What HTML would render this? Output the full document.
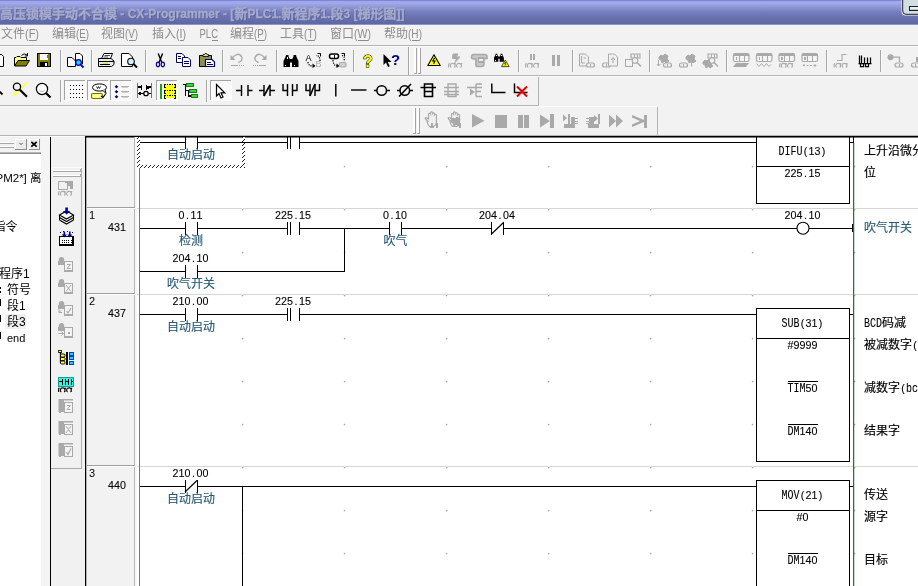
<!DOCTYPE html>
<html lang="zh"><head><meta charset="utf-8"><title>CX-Programmer</title>
<style>
html,body{margin:0;padding:0;background:#f2f2f2;overflow:hidden}
svg{display:block;position:absolute;left:0;top:0;will-change:transform}
text{white-space:pre}
</style></head><body>
<svg width="918" height="586" viewBox="0 0 918 586" shape-rendering="crispEdges">
<defs>
<linearGradient id="tg" x1="0" y1="0" x2="0" y2="1">
<stop offset="0" stop-color="#6c74ca"/><stop offset="0.06" stop-color="#9fa7ec"/><stop offset="0.13" stop-color="#a2aaea"/><stop offset="0.33" stop-color="#8a92d2"/><stop offset="0.5" stop-color="#767ebe"/><stop offset="0.7" stop-color="#6a72b0"/><stop offset="1" stop-color="#5f67a2"/>
</linearGradient>
<pattern id="hatch" width="4" height="4" patternUnits="userSpaceOnUse"><rect width="4" height="4" fill="#fff"/><path d="M-1,1 L1,-1 M0,4 L4,0 M3,5 L5,3" stroke="#222" stroke-width="1" shape-rendering="auto"/></pattern>
</defs>
<rect x="0" y="0" width="918" height="586" fill="#f2f2f2" stroke="none" stroke-width="1" />
<rect x="0" y="0" width="918" height="24" fill="url(#tg)" stroke="none" stroke-width="1" />
<rect x="0" y="24" width="918" height="1" fill="#8d93c2" stroke="none" stroke-width="1" />
<rect x="0" y="25" width="918" height="1" fill="#f2f3fb" stroke="none" stroke-width="1" />
<text x="0.8" y="18.7" font-weight="bold" fill="#59619a" font-family='"Liberation Sans", "Noto Sans CJK SC", sans-serif' ><tspan font-size="13">高压锁模手动不合模</tspan><tspan font-size="12"> - CX-Programmer - [</tspan><tspan font-size="13">新</tspan><tspan font-size="12">PLC1.</tspan><tspan font-size="13">新程序</tspan><tspan font-size="12">1.</tspan><tspan font-size="13">段</tspan><tspan font-size="12">3 [</tspan><tspan font-size="13">梯形图</tspan><tspan font-size="12">]]</tspan></text>
<text x="0" y="17.9" font-weight="bold" fill="#a6abce" font-family='"Liberation Sans", "Noto Sans CJK SC", sans-serif' stroke="#a6abce" stroke-width="0.3"><tspan font-size="13">高压锁模手动不合模</tspan><tspan font-size="12"> - CX-Programmer - [</tspan><tspan font-size="13">新</tspan><tspan font-size="12">PLC1.</tspan><tspan font-size="13">新程序</tspan><tspan font-size="12">1.</tspan><tspan font-size="13">段</tspan><tspan font-size="12">3 [</tspan><tspan font-size="13">梯形图</tspan><tspan font-size="12">]]</tspan></text>
<path d="M901.5,-1 V11.5 Q901.5,15.5 905.5,15.5 H919 V-1 Z" fill="#f4f6fa" shape-rendering="auto"/>
<path d="M902.7,-1 V11 Q902.7,14.3 906,14.3 H919 V-1 Z" fill="#d3dee2" stroke="#1c1f2c" stroke-width="1" shape-rendering="auto"/>
<rect x="909.5" y="6.5" width="10" height="4" fill="#ecf0f0" stroke="#1c1f2c" stroke-width="1" />
<rect x="910" y="9" width="9" height="1" fill="#c0c4c4" stroke="none" stroke-width="1" />
<text x="1" y="38.2" font-size="12" fill="#8c8c8c" font-family='"Liberation Sans", "Noto Sans CJK SC", sans-serif'>文件</text>
<text x="25" y="38" font-size="12.3" fill="#8c8c8c" font-family='"Liberation Sans", "Noto Sans CJK SC", sans-serif' textLength="14" lengthAdjust="spacingAndGlyphs">(F)</text>
<rect x="28.5" y="39.5" width="7.0" height="1" fill="#8c8c8c" stroke="none" stroke-width="1" />
<text x="52" y="38.2" font-size="12" fill="#8c8c8c" font-family='"Liberation Sans", "Noto Sans CJK SC", sans-serif'>编辑</text>
<text x="76" y="38" font-size="12.3" fill="#8c8c8c" font-family='"Liberation Sans", "Noto Sans CJK SC", sans-serif' textLength="13" lengthAdjust="spacingAndGlyphs">(E)</text>
<rect x="79.5" y="39.5" width="6.0" height="1" fill="#8c8c8c" stroke="none" stroke-width="1" />
<text x="101" y="38.2" font-size="12" fill="#8c8c8c" font-family='"Liberation Sans", "Noto Sans CJK SC", sans-serif'>视图</text>
<text x="125" y="38" font-size="12.3" fill="#8c8c8c" font-family='"Liberation Sans", "Noto Sans CJK SC", sans-serif' textLength="13" lengthAdjust="spacingAndGlyphs">(V)</text>
<rect x="128.5" y="39.5" width="6.0" height="1" fill="#8c8c8c" stroke="none" stroke-width="1" />
<text x="152" y="38.2" font-size="12" fill="#8c8c8c" font-family='"Liberation Sans", "Noto Sans CJK SC", sans-serif'>插入</text>
<text x="176" y="38" font-size="12.3" fill="#8c8c8c" font-family='"Liberation Sans", "Noto Sans CJK SC", sans-serif' textLength="10" lengthAdjust="spacingAndGlyphs">(I)</text>
<rect x="179.5" y="39.5" width="3.0" height="1" fill="#8c8c8c" stroke="none" stroke-width="1" />
<text x="199.5" y="38" font-size="12.3" fill="#8c8c8c" font-family='"Liberation Sans", "Noto Sans CJK SC", sans-serif' textLength="18.5" lengthAdjust="spacingAndGlyphs">PLC</text>
<rect x="211.5" y="39.5" width="6.5" height="1" fill="#8c8c8c" stroke="none" stroke-width="1" />
<text x="230" y="38.2" font-size="12" fill="#8c8c8c" font-family='"Liberation Sans", "Noto Sans CJK SC", sans-serif'>编程</text>
<text x="254" y="38" font-size="12.3" fill="#8c8c8c" font-family='"Liberation Sans", "Noto Sans CJK SC", sans-serif' textLength="13" lengthAdjust="spacingAndGlyphs">(P)</text>
<rect x="257.5" y="39.5" width="6.0" height="1" fill="#8c8c8c" stroke="none" stroke-width="1" />
<text x="280" y="38.2" font-size="12" fill="#8c8c8c" font-family='"Liberation Sans", "Noto Sans CJK SC", sans-serif'>工具</text>
<text x="304" y="38" font-size="12.3" fill="#8c8c8c" font-family='"Liberation Sans", "Noto Sans CJK SC", sans-serif' textLength="13" lengthAdjust="spacingAndGlyphs">(T)</text>
<rect x="307.5" y="39.5" width="6.0" height="1" fill="#8c8c8c" stroke="none" stroke-width="1" />
<text x="330" y="38.2" font-size="12" fill="#8c8c8c" font-family='"Liberation Sans", "Noto Sans CJK SC", sans-serif'>窗口</text>
<text x="354" y="38" font-size="12.3" fill="#8c8c8c" font-family='"Liberation Sans", "Noto Sans CJK SC", sans-serif' textLength="17" lengthAdjust="spacingAndGlyphs">(W)</text>
<rect x="357.5" y="39.5" width="10.0" height="1" fill="#8c8c8c" stroke="none" stroke-width="1" />
<text x="384" y="38.2" font-size="12" fill="#8c8c8c" font-family='"Liberation Sans", "Noto Sans CJK SC", sans-serif'>帮助</text>
<text x="408" y="38" font-size="12.3" fill="#8c8c8c" font-family='"Liberation Sans", "Noto Sans CJK SC", sans-serif' textLength="14" lengthAdjust="spacingAndGlyphs">(H)</text>
<rect x="411.5" y="39.5" width="7.0" height="1" fill="#8c8c8c" stroke="none" stroke-width="1" />
<rect x="0" y="45" width="918" height="1" fill="#b4b4b4" stroke="none" stroke-width="1" />
<rect x="0" y="46" width="918" height="1" fill="#fbfbfb" stroke="none" stroke-width="1" />
<rect x="0" y="75" width="918" height="1" fill="#b4b4b4" stroke="none" stroke-width="1" />
<rect x="0" y="76" width="918" height="1" fill="#fbfbfb" stroke="none" stroke-width="1" />
<rect x="0" y="105" width="538" height="1" fill="#b4b4b4" stroke="none" stroke-width="1" />
<rect x="0" y="106" width="657" height="1" fill="#fbfbfb" stroke="none" stroke-width="1" />
<rect x="538" y="77" width="1" height="29" fill="#b4b4b4" stroke="none" stroke-width="1" />
<rect x="657" y="107" width="1" height="29" fill="#b4b4b4" stroke="none" stroke-width="1" />
<rect x="0" y="135" width="918" height="1" fill="#b4b4b4" stroke="none" stroke-width="1" />
<rect x="0" y="136" width="918" height="1" fill="#fcfcfc" stroke="none" stroke-width="1" />
<rect x="0" y="154" width="41" height="432" fill="#ffffff" stroke="none" stroke-width="1" />
<rect x="0" y="152" width="41" height="1" fill="#b8b8b8" stroke="none" stroke-width="1" />
<rect x="0" y="153" width="41" height="1" fill="#8c8c8c" stroke="none" stroke-width="1" />
<rect x="50" y="137" width="1" height="449" fill="#000" stroke="none" stroke-width="1" />
<rect x="51" y="137" width="1" height="449" fill="#000" stroke="none" stroke-width="1" opacity="0.25"/>
<rect x="0" y="142" width="14" height="1" fill="#fff" stroke="none" stroke-width="1" />
<rect x="0" y="143" width="14" height="1" fill="#a8a8a8" stroke="none" stroke-width="1" />
<rect x="0" y="146" width="14" height="1" fill="#fff" stroke="none" stroke-width="1" />
<rect x="0" y="147" width="14" height="1" fill="#a8a8a8" stroke="none" stroke-width="1" />
<rect x="15" y="139" width="12" height="11" fill="#ececec" stroke="none" stroke-width="1" />
<rect x="15" y="139" width="12" height="1" fill="#fff" stroke="none" stroke-width="1" />
<rect x="15" y="139" width="1" height="11" fill="#fff" stroke="none" stroke-width="1" />
<rect x="26" y="139" width="1" height="11" fill="#8c8c8c" stroke="none" stroke-width="1" />
<rect x="15" y="149" width="12" height="1" fill="#8c8c8c" stroke="none" stroke-width="1" />
<path d="M18.5,142.5 h5 l-2.5,3 z" fill="#a0a0a0"/>
<rect x="29" y="139" width="11" height="11" fill="#ececec" stroke="none" stroke-width="1" />
<rect x="29" y="139" width="11" height="1" fill="#fff" stroke="none" stroke-width="1" />
<rect x="29" y="139" width="1" height="11" fill="#fff" stroke="none" stroke-width="1" />
<rect x="39" y="139" width="1" height="11" fill="#8c8c8c" stroke="none" stroke-width="1" />
<rect x="29" y="149" width="11" height="1" fill="#8c8c8c" stroke="none" stroke-width="1" />
<path d="M31.3,141.8 L36.7,146.7 M36.7,141.8 L31.3,146.7" stroke="#000" stroke-width="1.8" shape-rendering="auto"/>
<text x="-4.5" y="181.5" font-size="11.5" fill="#000" font-family='"Liberation Sans", "Noto Sans CJK SC", sans-serif'>PM2*] 离</text>
<text x="-6.5" y="230.5" font-size="12" fill="#000" font-family='"Liberation Sans", "Noto Sans CJK SC", sans-serif'>指令</text>
<text x="-13" y="277.9" font-size="12" fill="#000" font-family='"Liberation Sans", "Noto Sans CJK SC", sans-serif'>新程序1</text>
<text x="7" y="294" font-size="12" fill="#000" font-family='"Liberation Sans", "Noto Sans CJK SC", sans-serif'>符号</text>
<text x="7" y="310" font-size="12" fill="#000" font-family='"Liberation Sans", "Noto Sans CJK SC", sans-serif'>段1</text>
<rect x="5" y="314" width="21" height="15" fill="#f0f0f0" stroke="none" stroke-width="1" />
<text x="7" y="326" font-size="12" fill="#000" font-family='"Liberation Sans", "Noto Sans CJK SC", sans-serif'>段3</text>
<text x="7" y="342" font-size="11" fill="#000" font-family='"Liberation Sans", "Noto Sans CJK SC", sans-serif'>end</text>
<rect x="41" y="137" width="9" height="449" fill="#f4f4f4" stroke="none" stroke-width="1" />
<rect x="0" y="287" width="1" height="2" fill="#000" stroke="none" stroke-width="1" />
<rect x="0" y="291" width="1" height="2" fill="#000" stroke="none" stroke-width="1" />
<rect x="0" y="299" width="1" height="7" fill="#000" stroke="none" stroke-width="1" />
<rect x="0" y="315" width="1" height="7" fill="#000" stroke="none" stroke-width="1" />
<rect x="0" y="332" width="1" height="7" fill="#000" stroke="none" stroke-width="1" />
<rect x="51" y="137" width="34" height="449" fill="#f1f1f1" stroke="none" stroke-width="1" />
<rect x="51" y="468" width="31" height="1" fill="#a8a8a8" stroke="none" stroke-width="1" />
<rect x="81" y="167" width="1" height="301" fill="#b0b0b0" stroke="none" stroke-width="1" />
<rect x="53" y="170" width="27" height="1" fill="#fff" stroke="none" stroke-width="1" />
<rect x="53" y="171" width="27" height="1" fill="#a8a8a8" stroke="none" stroke-width="1" />
<rect x="80" y="169" width="1" height="3" fill="#a8a8a8" stroke="none" stroke-width="1" />
<rect x="53" y="175" width="27" height="1" fill="#fff" stroke="none" stroke-width="1" />
<rect x="53" y="176" width="27" height="1" fill="#a8a8a8" stroke="none" stroke-width="1" />
<rect x="80" y="174" width="1" height="3" fill="#a8a8a8" stroke="none" stroke-width="1" />
<rect x="52" y="167" width="30" height="1" fill="#fbfbfb" stroke="none" stroke-width="1" />
<rect x="85" y="136" width="833" height="450" fill="#ffffff" stroke="none" stroke-width="1" />
<rect x="85" y="136" width="833" height="1" fill="#000" stroke="none" stroke-width="1" />
<rect x="85" y="137" width="833" height="1" fill="#000" stroke="none" stroke-width="1" opacity="0.55"/>
<rect x="85" y="136" width="1" height="450" fill="#000" stroke="none" stroke-width="1" />
<rect x="86" y="137" width="1" height="449" fill="#000" stroke="none" stroke-width="1" opacity="0.3"/>
<rect x="86.5" y="137.5" width="48" height="449" fill="#f2f2f2" stroke="none" stroke-width="1" />
<rect x="134" y="137" width="1" height="449" fill="#b8b8b8" stroke="none" stroke-width="1" />
<rect x="135" y="137" width="2" height="449" fill="#f6f6f6" stroke="none" stroke-width="1" />
<rect x="137" y="208" width="781" height="1" fill="#d6d6d6" stroke="none" stroke-width="1" />
<rect x="86.5" y="207" width="48" height="1" fill="#a0a0a0" stroke="none" stroke-width="1" />
<rect x="86.5" y="208" width="48" height="1" fill="#fdfdfd" stroke="none" stroke-width="1" />
<rect x="137" y="294" width="781" height="1" fill="#d6d6d6" stroke="none" stroke-width="1" />
<rect x="86.5" y="293" width="48" height="1" fill="#a0a0a0" stroke="none" stroke-width="1" />
<rect x="86.5" y="294" width="48" height="1" fill="#fdfdfd" stroke="none" stroke-width="1" />
<rect x="137" y="466" width="781" height="1" fill="#d6d6d6" stroke="none" stroke-width="1" />
<rect x="86.5" y="465" width="48" height="1" fill="#a0a0a0" stroke="none" stroke-width="1" />
<rect x="86.5" y="466" width="48" height="1" fill="#fdfdfd" stroke="none" stroke-width="1" />
<rect x="242" y="166" width="1" height="1" fill="#adadad" stroke="none" stroke-width="1" />
<rect x="243" y="166" width="1" height="1" fill="#dedede" stroke="none" stroke-width="1" />
<rect x="242" y="167" width="1" height="1" fill="#dedede" stroke="none" stroke-width="1" />
<rect x="241" y="166" width="1" height="1" fill="#efefef" stroke="none" stroke-width="1" />
<rect x="242" y="165" width="1" height="1" fill="#efefef" stroke="none" stroke-width="1" />
<rect x="344" y="166" width="1" height="1" fill="#adadad" stroke="none" stroke-width="1" />
<rect x="345" y="166" width="1" height="1" fill="#dedede" stroke="none" stroke-width="1" />
<rect x="344" y="167" width="1" height="1" fill="#dedede" stroke="none" stroke-width="1" />
<rect x="343" y="166" width="1" height="1" fill="#efefef" stroke="none" stroke-width="1" />
<rect x="344" y="165" width="1" height="1" fill="#efefef" stroke="none" stroke-width="1" />
<rect x="446" y="166" width="1" height="1" fill="#adadad" stroke="none" stroke-width="1" />
<rect x="447" y="166" width="1" height="1" fill="#dedede" stroke="none" stroke-width="1" />
<rect x="446" y="167" width="1" height="1" fill="#dedede" stroke="none" stroke-width="1" />
<rect x="445" y="166" width="1" height="1" fill="#efefef" stroke="none" stroke-width="1" />
<rect x="446" y="165" width="1" height="1" fill="#efefef" stroke="none" stroke-width="1" />
<rect x="548" y="166" width="1" height="1" fill="#adadad" stroke="none" stroke-width="1" />
<rect x="549" y="166" width="1" height="1" fill="#dedede" stroke="none" stroke-width="1" />
<rect x="548" y="167" width="1" height="1" fill="#dedede" stroke="none" stroke-width="1" />
<rect x="547" y="166" width="1" height="1" fill="#efefef" stroke="none" stroke-width="1" />
<rect x="548" y="165" width="1" height="1" fill="#efefef" stroke="none" stroke-width="1" />
<rect x="650" y="166" width="1" height="1" fill="#adadad" stroke="none" stroke-width="1" />
<rect x="651" y="166" width="1" height="1" fill="#dedede" stroke="none" stroke-width="1" />
<rect x="650" y="167" width="1" height="1" fill="#dedede" stroke="none" stroke-width="1" />
<rect x="649" y="166" width="1" height="1" fill="#efefef" stroke="none" stroke-width="1" />
<rect x="650" y="165" width="1" height="1" fill="#efefef" stroke="none" stroke-width="1" />
<rect x="752" y="166" width="1" height="1" fill="#adadad" stroke="none" stroke-width="1" />
<rect x="753" y="166" width="1" height="1" fill="#dedede" stroke="none" stroke-width="1" />
<rect x="752" y="167" width="1" height="1" fill="#dedede" stroke="none" stroke-width="1" />
<rect x="751" y="166" width="1" height="1" fill="#efefef" stroke="none" stroke-width="1" />
<rect x="752" y="165" width="1" height="1" fill="#efefef" stroke="none" stroke-width="1" />
<rect x="854" y="166" width="1" height="1" fill="#adadad" stroke="none" stroke-width="1" />
<rect x="855" y="166" width="1" height="1" fill="#dedede" stroke="none" stroke-width="1" />
<rect x="854" y="167" width="1" height="1" fill="#dedede" stroke="none" stroke-width="1" />
<rect x="853" y="166" width="1" height="1" fill="#efefef" stroke="none" stroke-width="1" />
<rect x="854" y="165" width="1" height="1" fill="#efefef" stroke="none" stroke-width="1" />
<rect x="242" y="209" width="1" height="1" fill="#adadad" stroke="none" stroke-width="1" />
<rect x="243" y="209" width="1" height="1" fill="#dedede" stroke="none" stroke-width="1" />
<rect x="242" y="210" width="1" height="1" fill="#dedede" stroke="none" stroke-width="1" />
<rect x="241" y="209" width="1" height="1" fill="#efefef" stroke="none" stroke-width="1" />
<rect x="242" y="208" width="1" height="1" fill="#efefef" stroke="none" stroke-width="1" />
<rect x="344" y="209" width="1" height="1" fill="#adadad" stroke="none" stroke-width="1" />
<rect x="345" y="209" width="1" height="1" fill="#dedede" stroke="none" stroke-width="1" />
<rect x="344" y="210" width="1" height="1" fill="#dedede" stroke="none" stroke-width="1" />
<rect x="343" y="209" width="1" height="1" fill="#efefef" stroke="none" stroke-width="1" />
<rect x="344" y="208" width="1" height="1" fill="#efefef" stroke="none" stroke-width="1" />
<rect x="446" y="209" width="1" height="1" fill="#adadad" stroke="none" stroke-width="1" />
<rect x="447" y="209" width="1" height="1" fill="#dedede" stroke="none" stroke-width="1" />
<rect x="446" y="210" width="1" height="1" fill="#dedede" stroke="none" stroke-width="1" />
<rect x="445" y="209" width="1" height="1" fill="#efefef" stroke="none" stroke-width="1" />
<rect x="446" y="208" width="1" height="1" fill="#efefef" stroke="none" stroke-width="1" />
<rect x="548" y="209" width="1" height="1" fill="#adadad" stroke="none" stroke-width="1" />
<rect x="549" y="209" width="1" height="1" fill="#dedede" stroke="none" stroke-width="1" />
<rect x="548" y="210" width="1" height="1" fill="#dedede" stroke="none" stroke-width="1" />
<rect x="547" y="209" width="1" height="1" fill="#efefef" stroke="none" stroke-width="1" />
<rect x="548" y="208" width="1" height="1" fill="#efefef" stroke="none" stroke-width="1" />
<rect x="650" y="209" width="1" height="1" fill="#adadad" stroke="none" stroke-width="1" />
<rect x="651" y="209" width="1" height="1" fill="#dedede" stroke="none" stroke-width="1" />
<rect x="650" y="210" width="1" height="1" fill="#dedede" stroke="none" stroke-width="1" />
<rect x="649" y="209" width="1" height="1" fill="#efefef" stroke="none" stroke-width="1" />
<rect x="650" y="208" width="1" height="1" fill="#efefef" stroke="none" stroke-width="1" />
<rect x="752" y="209" width="1" height="1" fill="#adadad" stroke="none" stroke-width="1" />
<rect x="753" y="209" width="1" height="1" fill="#dedede" stroke="none" stroke-width="1" />
<rect x="752" y="210" width="1" height="1" fill="#dedede" stroke="none" stroke-width="1" />
<rect x="751" y="209" width="1" height="1" fill="#efefef" stroke="none" stroke-width="1" />
<rect x="752" y="208" width="1" height="1" fill="#efefef" stroke="none" stroke-width="1" />
<rect x="854" y="209" width="1" height="1" fill="#adadad" stroke="none" stroke-width="1" />
<rect x="855" y="209" width="1" height="1" fill="#dedede" stroke="none" stroke-width="1" />
<rect x="854" y="210" width="1" height="1" fill="#dedede" stroke="none" stroke-width="1" />
<rect x="853" y="209" width="1" height="1" fill="#efefef" stroke="none" stroke-width="1" />
<rect x="854" y="208" width="1" height="1" fill="#efefef" stroke="none" stroke-width="1" />
<rect x="242" y="252" width="1" height="1" fill="#adadad" stroke="none" stroke-width="1" />
<rect x="243" y="252" width="1" height="1" fill="#dedede" stroke="none" stroke-width="1" />
<rect x="242" y="253" width="1" height="1" fill="#dedede" stroke="none" stroke-width="1" />
<rect x="241" y="252" width="1" height="1" fill="#efefef" stroke="none" stroke-width="1" />
<rect x="242" y="251" width="1" height="1" fill="#efefef" stroke="none" stroke-width="1" />
<rect x="344" y="252" width="1" height="1" fill="#adadad" stroke="none" stroke-width="1" />
<rect x="345" y="252" width="1" height="1" fill="#dedede" stroke="none" stroke-width="1" />
<rect x="344" y="253" width="1" height="1" fill="#dedede" stroke="none" stroke-width="1" />
<rect x="343" y="252" width="1" height="1" fill="#efefef" stroke="none" stroke-width="1" />
<rect x="344" y="251" width="1" height="1" fill="#efefef" stroke="none" stroke-width="1" />
<rect x="446" y="252" width="1" height="1" fill="#adadad" stroke="none" stroke-width="1" />
<rect x="447" y="252" width="1" height="1" fill="#dedede" stroke="none" stroke-width="1" />
<rect x="446" y="253" width="1" height="1" fill="#dedede" stroke="none" stroke-width="1" />
<rect x="445" y="252" width="1" height="1" fill="#efefef" stroke="none" stroke-width="1" />
<rect x="446" y="251" width="1" height="1" fill="#efefef" stroke="none" stroke-width="1" />
<rect x="548" y="252" width="1" height="1" fill="#adadad" stroke="none" stroke-width="1" />
<rect x="549" y="252" width="1" height="1" fill="#dedede" stroke="none" stroke-width="1" />
<rect x="548" y="253" width="1" height="1" fill="#dedede" stroke="none" stroke-width="1" />
<rect x="547" y="252" width="1" height="1" fill="#efefef" stroke="none" stroke-width="1" />
<rect x="548" y="251" width="1" height="1" fill="#efefef" stroke="none" stroke-width="1" />
<rect x="650" y="252" width="1" height="1" fill="#adadad" stroke="none" stroke-width="1" />
<rect x="651" y="252" width="1" height="1" fill="#dedede" stroke="none" stroke-width="1" />
<rect x="650" y="253" width="1" height="1" fill="#dedede" stroke="none" stroke-width="1" />
<rect x="649" y="252" width="1" height="1" fill="#efefef" stroke="none" stroke-width="1" />
<rect x="650" y="251" width="1" height="1" fill="#efefef" stroke="none" stroke-width="1" />
<rect x="752" y="252" width="1" height="1" fill="#adadad" stroke="none" stroke-width="1" />
<rect x="753" y="252" width="1" height="1" fill="#dedede" stroke="none" stroke-width="1" />
<rect x="752" y="253" width="1" height="1" fill="#dedede" stroke="none" stroke-width="1" />
<rect x="751" y="252" width="1" height="1" fill="#efefef" stroke="none" stroke-width="1" />
<rect x="752" y="251" width="1" height="1" fill="#efefef" stroke="none" stroke-width="1" />
<rect x="854" y="252" width="1" height="1" fill="#adadad" stroke="none" stroke-width="1" />
<rect x="855" y="252" width="1" height="1" fill="#dedede" stroke="none" stroke-width="1" />
<rect x="854" y="253" width="1" height="1" fill="#dedede" stroke="none" stroke-width="1" />
<rect x="853" y="252" width="1" height="1" fill="#efefef" stroke="none" stroke-width="1" />
<rect x="854" y="251" width="1" height="1" fill="#efefef" stroke="none" stroke-width="1" />
<rect x="242" y="295" width="1" height="1" fill="#adadad" stroke="none" stroke-width="1" />
<rect x="243" y="295" width="1" height="1" fill="#dedede" stroke="none" stroke-width="1" />
<rect x="242" y="296" width="1" height="1" fill="#dedede" stroke="none" stroke-width="1" />
<rect x="241" y="295" width="1" height="1" fill="#efefef" stroke="none" stroke-width="1" />
<rect x="242" y="294" width="1" height="1" fill="#efefef" stroke="none" stroke-width="1" />
<rect x="344" y="295" width="1" height="1" fill="#adadad" stroke="none" stroke-width="1" />
<rect x="345" y="295" width="1" height="1" fill="#dedede" stroke="none" stroke-width="1" />
<rect x="344" y="296" width="1" height="1" fill="#dedede" stroke="none" stroke-width="1" />
<rect x="343" y="295" width="1" height="1" fill="#efefef" stroke="none" stroke-width="1" />
<rect x="344" y="294" width="1" height="1" fill="#efefef" stroke="none" stroke-width="1" />
<rect x="446" y="295" width="1" height="1" fill="#adadad" stroke="none" stroke-width="1" />
<rect x="447" y="295" width="1" height="1" fill="#dedede" stroke="none" stroke-width="1" />
<rect x="446" y="296" width="1" height="1" fill="#dedede" stroke="none" stroke-width="1" />
<rect x="445" y="295" width="1" height="1" fill="#efefef" stroke="none" stroke-width="1" />
<rect x="446" y="294" width="1" height="1" fill="#efefef" stroke="none" stroke-width="1" />
<rect x="548" y="295" width="1" height="1" fill="#adadad" stroke="none" stroke-width="1" />
<rect x="549" y="295" width="1" height="1" fill="#dedede" stroke="none" stroke-width="1" />
<rect x="548" y="296" width="1" height="1" fill="#dedede" stroke="none" stroke-width="1" />
<rect x="547" y="295" width="1" height="1" fill="#efefef" stroke="none" stroke-width="1" />
<rect x="548" y="294" width="1" height="1" fill="#efefef" stroke="none" stroke-width="1" />
<rect x="650" y="295" width="1" height="1" fill="#adadad" stroke="none" stroke-width="1" />
<rect x="651" y="295" width="1" height="1" fill="#dedede" stroke="none" stroke-width="1" />
<rect x="650" y="296" width="1" height="1" fill="#dedede" stroke="none" stroke-width="1" />
<rect x="649" y="295" width="1" height="1" fill="#efefef" stroke="none" stroke-width="1" />
<rect x="650" y="294" width="1" height="1" fill="#efefef" stroke="none" stroke-width="1" />
<rect x="752" y="295" width="1" height="1" fill="#adadad" stroke="none" stroke-width="1" />
<rect x="753" y="295" width="1" height="1" fill="#dedede" stroke="none" stroke-width="1" />
<rect x="752" y="296" width="1" height="1" fill="#dedede" stroke="none" stroke-width="1" />
<rect x="751" y="295" width="1" height="1" fill="#efefef" stroke="none" stroke-width="1" />
<rect x="752" y="294" width="1" height="1" fill="#efefef" stroke="none" stroke-width="1" />
<rect x="854" y="295" width="1" height="1" fill="#adadad" stroke="none" stroke-width="1" />
<rect x="855" y="295" width="1" height="1" fill="#dedede" stroke="none" stroke-width="1" />
<rect x="854" y="296" width="1" height="1" fill="#dedede" stroke="none" stroke-width="1" />
<rect x="853" y="295" width="1" height="1" fill="#efefef" stroke="none" stroke-width="1" />
<rect x="854" y="294" width="1" height="1" fill="#efefef" stroke="none" stroke-width="1" />
<rect x="242" y="338" width="1" height="1" fill="#adadad" stroke="none" stroke-width="1" />
<rect x="243" y="338" width="1" height="1" fill="#dedede" stroke="none" stroke-width="1" />
<rect x="242" y="339" width="1" height="1" fill="#dedede" stroke="none" stroke-width="1" />
<rect x="241" y="338" width="1" height="1" fill="#efefef" stroke="none" stroke-width="1" />
<rect x="242" y="337" width="1" height="1" fill="#efefef" stroke="none" stroke-width="1" />
<rect x="344" y="338" width="1" height="1" fill="#adadad" stroke="none" stroke-width="1" />
<rect x="345" y="338" width="1" height="1" fill="#dedede" stroke="none" stroke-width="1" />
<rect x="344" y="339" width="1" height="1" fill="#dedede" stroke="none" stroke-width="1" />
<rect x="343" y="338" width="1" height="1" fill="#efefef" stroke="none" stroke-width="1" />
<rect x="344" y="337" width="1" height="1" fill="#efefef" stroke="none" stroke-width="1" />
<rect x="446" y="338" width="1" height="1" fill="#adadad" stroke="none" stroke-width="1" />
<rect x="447" y="338" width="1" height="1" fill="#dedede" stroke="none" stroke-width="1" />
<rect x="446" y="339" width="1" height="1" fill="#dedede" stroke="none" stroke-width="1" />
<rect x="445" y="338" width="1" height="1" fill="#efefef" stroke="none" stroke-width="1" />
<rect x="446" y="337" width="1" height="1" fill="#efefef" stroke="none" stroke-width="1" />
<rect x="548" y="338" width="1" height="1" fill="#adadad" stroke="none" stroke-width="1" />
<rect x="549" y="338" width="1" height="1" fill="#dedede" stroke="none" stroke-width="1" />
<rect x="548" y="339" width="1" height="1" fill="#dedede" stroke="none" stroke-width="1" />
<rect x="547" y="338" width="1" height="1" fill="#efefef" stroke="none" stroke-width="1" />
<rect x="548" y="337" width="1" height="1" fill="#efefef" stroke="none" stroke-width="1" />
<rect x="650" y="338" width="1" height="1" fill="#adadad" stroke="none" stroke-width="1" />
<rect x="651" y="338" width="1" height="1" fill="#dedede" stroke="none" stroke-width="1" />
<rect x="650" y="339" width="1" height="1" fill="#dedede" stroke="none" stroke-width="1" />
<rect x="649" y="338" width="1" height="1" fill="#efefef" stroke="none" stroke-width="1" />
<rect x="650" y="337" width="1" height="1" fill="#efefef" stroke="none" stroke-width="1" />
<rect x="752" y="338" width="1" height="1" fill="#adadad" stroke="none" stroke-width="1" />
<rect x="753" y="338" width="1" height="1" fill="#dedede" stroke="none" stroke-width="1" />
<rect x="752" y="339" width="1" height="1" fill="#dedede" stroke="none" stroke-width="1" />
<rect x="751" y="338" width="1" height="1" fill="#efefef" stroke="none" stroke-width="1" />
<rect x="752" y="337" width="1" height="1" fill="#efefef" stroke="none" stroke-width="1" />
<rect x="854" y="338" width="1" height="1" fill="#adadad" stroke="none" stroke-width="1" />
<rect x="855" y="338" width="1" height="1" fill="#dedede" stroke="none" stroke-width="1" />
<rect x="854" y="339" width="1" height="1" fill="#dedede" stroke="none" stroke-width="1" />
<rect x="853" y="338" width="1" height="1" fill="#efefef" stroke="none" stroke-width="1" />
<rect x="854" y="337" width="1" height="1" fill="#efefef" stroke="none" stroke-width="1" />
<rect x="242" y="381" width="1" height="1" fill="#adadad" stroke="none" stroke-width="1" />
<rect x="243" y="381" width="1" height="1" fill="#dedede" stroke="none" stroke-width="1" />
<rect x="242" y="382" width="1" height="1" fill="#dedede" stroke="none" stroke-width="1" />
<rect x="241" y="381" width="1" height="1" fill="#efefef" stroke="none" stroke-width="1" />
<rect x="242" y="380" width="1" height="1" fill="#efefef" stroke="none" stroke-width="1" />
<rect x="344" y="381" width="1" height="1" fill="#adadad" stroke="none" stroke-width="1" />
<rect x="345" y="381" width="1" height="1" fill="#dedede" stroke="none" stroke-width="1" />
<rect x="344" y="382" width="1" height="1" fill="#dedede" stroke="none" stroke-width="1" />
<rect x="343" y="381" width="1" height="1" fill="#efefef" stroke="none" stroke-width="1" />
<rect x="344" y="380" width="1" height="1" fill="#efefef" stroke="none" stroke-width="1" />
<rect x="446" y="381" width="1" height="1" fill="#adadad" stroke="none" stroke-width="1" />
<rect x="447" y="381" width="1" height="1" fill="#dedede" stroke="none" stroke-width="1" />
<rect x="446" y="382" width="1" height="1" fill="#dedede" stroke="none" stroke-width="1" />
<rect x="445" y="381" width="1" height="1" fill="#efefef" stroke="none" stroke-width="1" />
<rect x="446" y="380" width="1" height="1" fill="#efefef" stroke="none" stroke-width="1" />
<rect x="548" y="381" width="1" height="1" fill="#adadad" stroke="none" stroke-width="1" />
<rect x="549" y="381" width="1" height="1" fill="#dedede" stroke="none" stroke-width="1" />
<rect x="548" y="382" width="1" height="1" fill="#dedede" stroke="none" stroke-width="1" />
<rect x="547" y="381" width="1" height="1" fill="#efefef" stroke="none" stroke-width="1" />
<rect x="548" y="380" width="1" height="1" fill="#efefef" stroke="none" stroke-width="1" />
<rect x="650" y="381" width="1" height="1" fill="#adadad" stroke="none" stroke-width="1" />
<rect x="651" y="381" width="1" height="1" fill="#dedede" stroke="none" stroke-width="1" />
<rect x="650" y="382" width="1" height="1" fill="#dedede" stroke="none" stroke-width="1" />
<rect x="649" y="381" width="1" height="1" fill="#efefef" stroke="none" stroke-width="1" />
<rect x="650" y="380" width="1" height="1" fill="#efefef" stroke="none" stroke-width="1" />
<rect x="752" y="381" width="1" height="1" fill="#adadad" stroke="none" stroke-width="1" />
<rect x="753" y="381" width="1" height="1" fill="#dedede" stroke="none" stroke-width="1" />
<rect x="752" y="382" width="1" height="1" fill="#dedede" stroke="none" stroke-width="1" />
<rect x="751" y="381" width="1" height="1" fill="#efefef" stroke="none" stroke-width="1" />
<rect x="752" y="380" width="1" height="1" fill="#efefef" stroke="none" stroke-width="1" />
<rect x="854" y="381" width="1" height="1" fill="#adadad" stroke="none" stroke-width="1" />
<rect x="855" y="381" width="1" height="1" fill="#dedede" stroke="none" stroke-width="1" />
<rect x="854" y="382" width="1" height="1" fill="#dedede" stroke="none" stroke-width="1" />
<rect x="853" y="381" width="1" height="1" fill="#efefef" stroke="none" stroke-width="1" />
<rect x="854" y="380" width="1" height="1" fill="#efefef" stroke="none" stroke-width="1" />
<rect x="242" y="424" width="1" height="1" fill="#adadad" stroke="none" stroke-width="1" />
<rect x="243" y="424" width="1" height="1" fill="#dedede" stroke="none" stroke-width="1" />
<rect x="242" y="425" width="1" height="1" fill="#dedede" stroke="none" stroke-width="1" />
<rect x="241" y="424" width="1" height="1" fill="#efefef" stroke="none" stroke-width="1" />
<rect x="242" y="423" width="1" height="1" fill="#efefef" stroke="none" stroke-width="1" />
<rect x="344" y="424" width="1" height="1" fill="#adadad" stroke="none" stroke-width="1" />
<rect x="345" y="424" width="1" height="1" fill="#dedede" stroke="none" stroke-width="1" />
<rect x="344" y="425" width="1" height="1" fill="#dedede" stroke="none" stroke-width="1" />
<rect x="343" y="424" width="1" height="1" fill="#efefef" stroke="none" stroke-width="1" />
<rect x="344" y="423" width="1" height="1" fill="#efefef" stroke="none" stroke-width="1" />
<rect x="446" y="424" width="1" height="1" fill="#adadad" stroke="none" stroke-width="1" />
<rect x="447" y="424" width="1" height="1" fill="#dedede" stroke="none" stroke-width="1" />
<rect x="446" y="425" width="1" height="1" fill="#dedede" stroke="none" stroke-width="1" />
<rect x="445" y="424" width="1" height="1" fill="#efefef" stroke="none" stroke-width="1" />
<rect x="446" y="423" width="1" height="1" fill="#efefef" stroke="none" stroke-width="1" />
<rect x="548" y="424" width="1" height="1" fill="#adadad" stroke="none" stroke-width="1" />
<rect x="549" y="424" width="1" height="1" fill="#dedede" stroke="none" stroke-width="1" />
<rect x="548" y="425" width="1" height="1" fill="#dedede" stroke="none" stroke-width="1" />
<rect x="547" y="424" width="1" height="1" fill="#efefef" stroke="none" stroke-width="1" />
<rect x="548" y="423" width="1" height="1" fill="#efefef" stroke="none" stroke-width="1" />
<rect x="650" y="424" width="1" height="1" fill="#adadad" stroke="none" stroke-width="1" />
<rect x="651" y="424" width="1" height="1" fill="#dedede" stroke="none" stroke-width="1" />
<rect x="650" y="425" width="1" height="1" fill="#dedede" stroke="none" stroke-width="1" />
<rect x="649" y="424" width="1" height="1" fill="#efefef" stroke="none" stroke-width="1" />
<rect x="650" y="423" width="1" height="1" fill="#efefef" stroke="none" stroke-width="1" />
<rect x="752" y="424" width="1" height="1" fill="#adadad" stroke="none" stroke-width="1" />
<rect x="753" y="424" width="1" height="1" fill="#dedede" stroke="none" stroke-width="1" />
<rect x="752" y="425" width="1" height="1" fill="#dedede" stroke="none" stroke-width="1" />
<rect x="751" y="424" width="1" height="1" fill="#efefef" stroke="none" stroke-width="1" />
<rect x="752" y="423" width="1" height="1" fill="#efefef" stroke="none" stroke-width="1" />
<rect x="854" y="424" width="1" height="1" fill="#adadad" stroke="none" stroke-width="1" />
<rect x="855" y="424" width="1" height="1" fill="#dedede" stroke="none" stroke-width="1" />
<rect x="854" y="425" width="1" height="1" fill="#dedede" stroke="none" stroke-width="1" />
<rect x="853" y="424" width="1" height="1" fill="#efefef" stroke="none" stroke-width="1" />
<rect x="854" y="423" width="1" height="1" fill="#efefef" stroke="none" stroke-width="1" />
<rect x="242" y="467" width="1" height="1" fill="#adadad" stroke="none" stroke-width="1" />
<rect x="243" y="467" width="1" height="1" fill="#dedede" stroke="none" stroke-width="1" />
<rect x="242" y="468" width="1" height="1" fill="#dedede" stroke="none" stroke-width="1" />
<rect x="241" y="467" width="1" height="1" fill="#efefef" stroke="none" stroke-width="1" />
<rect x="242" y="466" width="1" height="1" fill="#efefef" stroke="none" stroke-width="1" />
<rect x="344" y="467" width="1" height="1" fill="#adadad" stroke="none" stroke-width="1" />
<rect x="345" y="467" width="1" height="1" fill="#dedede" stroke="none" stroke-width="1" />
<rect x="344" y="468" width="1" height="1" fill="#dedede" stroke="none" stroke-width="1" />
<rect x="343" y="467" width="1" height="1" fill="#efefef" stroke="none" stroke-width="1" />
<rect x="344" y="466" width="1" height="1" fill="#efefef" stroke="none" stroke-width="1" />
<rect x="446" y="467" width="1" height="1" fill="#adadad" stroke="none" stroke-width="1" />
<rect x="447" y="467" width="1" height="1" fill="#dedede" stroke="none" stroke-width="1" />
<rect x="446" y="468" width="1" height="1" fill="#dedede" stroke="none" stroke-width="1" />
<rect x="445" y="467" width="1" height="1" fill="#efefef" stroke="none" stroke-width="1" />
<rect x="446" y="466" width="1" height="1" fill="#efefef" stroke="none" stroke-width="1" />
<rect x="548" y="467" width="1" height="1" fill="#adadad" stroke="none" stroke-width="1" />
<rect x="549" y="467" width="1" height="1" fill="#dedede" stroke="none" stroke-width="1" />
<rect x="548" y="468" width="1" height="1" fill="#dedede" stroke="none" stroke-width="1" />
<rect x="547" y="467" width="1" height="1" fill="#efefef" stroke="none" stroke-width="1" />
<rect x="548" y="466" width="1" height="1" fill="#efefef" stroke="none" stroke-width="1" />
<rect x="650" y="467" width="1" height="1" fill="#adadad" stroke="none" stroke-width="1" />
<rect x="651" y="467" width="1" height="1" fill="#dedede" stroke="none" stroke-width="1" />
<rect x="650" y="468" width="1" height="1" fill="#dedede" stroke="none" stroke-width="1" />
<rect x="649" y="467" width="1" height="1" fill="#efefef" stroke="none" stroke-width="1" />
<rect x="650" y="466" width="1" height="1" fill="#efefef" stroke="none" stroke-width="1" />
<rect x="752" y="467" width="1" height="1" fill="#adadad" stroke="none" stroke-width="1" />
<rect x="753" y="467" width="1" height="1" fill="#dedede" stroke="none" stroke-width="1" />
<rect x="752" y="468" width="1" height="1" fill="#dedede" stroke="none" stroke-width="1" />
<rect x="751" y="467" width="1" height="1" fill="#efefef" stroke="none" stroke-width="1" />
<rect x="752" y="466" width="1" height="1" fill="#efefef" stroke="none" stroke-width="1" />
<rect x="854" y="467" width="1" height="1" fill="#adadad" stroke="none" stroke-width="1" />
<rect x="855" y="467" width="1" height="1" fill="#dedede" stroke="none" stroke-width="1" />
<rect x="854" y="468" width="1" height="1" fill="#dedede" stroke="none" stroke-width="1" />
<rect x="853" y="467" width="1" height="1" fill="#efefef" stroke="none" stroke-width="1" />
<rect x="854" y="466" width="1" height="1" fill="#efefef" stroke="none" stroke-width="1" />
<rect x="242" y="510" width="1" height="1" fill="#adadad" stroke="none" stroke-width="1" />
<rect x="243" y="510" width="1" height="1" fill="#dedede" stroke="none" stroke-width="1" />
<rect x="242" y="511" width="1" height="1" fill="#dedede" stroke="none" stroke-width="1" />
<rect x="241" y="510" width="1" height="1" fill="#efefef" stroke="none" stroke-width="1" />
<rect x="242" y="509" width="1" height="1" fill="#efefef" stroke="none" stroke-width="1" />
<rect x="344" y="510" width="1" height="1" fill="#adadad" stroke="none" stroke-width="1" />
<rect x="345" y="510" width="1" height="1" fill="#dedede" stroke="none" stroke-width="1" />
<rect x="344" y="511" width="1" height="1" fill="#dedede" stroke="none" stroke-width="1" />
<rect x="343" y="510" width="1" height="1" fill="#efefef" stroke="none" stroke-width="1" />
<rect x="344" y="509" width="1" height="1" fill="#efefef" stroke="none" stroke-width="1" />
<rect x="446" y="510" width="1" height="1" fill="#adadad" stroke="none" stroke-width="1" />
<rect x="447" y="510" width="1" height="1" fill="#dedede" stroke="none" stroke-width="1" />
<rect x="446" y="511" width="1" height="1" fill="#dedede" stroke="none" stroke-width="1" />
<rect x="445" y="510" width="1" height="1" fill="#efefef" stroke="none" stroke-width="1" />
<rect x="446" y="509" width="1" height="1" fill="#efefef" stroke="none" stroke-width="1" />
<rect x="548" y="510" width="1" height="1" fill="#adadad" stroke="none" stroke-width="1" />
<rect x="549" y="510" width="1" height="1" fill="#dedede" stroke="none" stroke-width="1" />
<rect x="548" y="511" width="1" height="1" fill="#dedede" stroke="none" stroke-width="1" />
<rect x="547" y="510" width="1" height="1" fill="#efefef" stroke="none" stroke-width="1" />
<rect x="548" y="509" width="1" height="1" fill="#efefef" stroke="none" stroke-width="1" />
<rect x="650" y="510" width="1" height="1" fill="#adadad" stroke="none" stroke-width="1" />
<rect x="651" y="510" width="1" height="1" fill="#dedede" stroke="none" stroke-width="1" />
<rect x="650" y="511" width="1" height="1" fill="#dedede" stroke="none" stroke-width="1" />
<rect x="649" y="510" width="1" height="1" fill="#efefef" stroke="none" stroke-width="1" />
<rect x="650" y="509" width="1" height="1" fill="#efefef" stroke="none" stroke-width="1" />
<rect x="752" y="510" width="1" height="1" fill="#adadad" stroke="none" stroke-width="1" />
<rect x="753" y="510" width="1" height="1" fill="#dedede" stroke="none" stroke-width="1" />
<rect x="752" y="511" width="1" height="1" fill="#dedede" stroke="none" stroke-width="1" />
<rect x="751" y="510" width="1" height="1" fill="#efefef" stroke="none" stroke-width="1" />
<rect x="752" y="509" width="1" height="1" fill="#efefef" stroke="none" stroke-width="1" />
<rect x="854" y="510" width="1" height="1" fill="#adadad" stroke="none" stroke-width="1" />
<rect x="855" y="510" width="1" height="1" fill="#dedede" stroke="none" stroke-width="1" />
<rect x="854" y="511" width="1" height="1" fill="#dedede" stroke="none" stroke-width="1" />
<rect x="853" y="510" width="1" height="1" fill="#efefef" stroke="none" stroke-width="1" />
<rect x="854" y="509" width="1" height="1" fill="#efefef" stroke="none" stroke-width="1" />
<rect x="242" y="553" width="1" height="1" fill="#adadad" stroke="none" stroke-width="1" />
<rect x="243" y="553" width="1" height="1" fill="#dedede" stroke="none" stroke-width="1" />
<rect x="242" y="554" width="1" height="1" fill="#dedede" stroke="none" stroke-width="1" />
<rect x="241" y="553" width="1" height="1" fill="#efefef" stroke="none" stroke-width="1" />
<rect x="242" y="552" width="1" height="1" fill="#efefef" stroke="none" stroke-width="1" />
<rect x="344" y="553" width="1" height="1" fill="#adadad" stroke="none" stroke-width="1" />
<rect x="345" y="553" width="1" height="1" fill="#dedede" stroke="none" stroke-width="1" />
<rect x="344" y="554" width="1" height="1" fill="#dedede" stroke="none" stroke-width="1" />
<rect x="343" y="553" width="1" height="1" fill="#efefef" stroke="none" stroke-width="1" />
<rect x="344" y="552" width="1" height="1" fill="#efefef" stroke="none" stroke-width="1" />
<rect x="446" y="553" width="1" height="1" fill="#adadad" stroke="none" stroke-width="1" />
<rect x="447" y="553" width="1" height="1" fill="#dedede" stroke="none" stroke-width="1" />
<rect x="446" y="554" width="1" height="1" fill="#dedede" stroke="none" stroke-width="1" />
<rect x="445" y="553" width="1" height="1" fill="#efefef" stroke="none" stroke-width="1" />
<rect x="446" y="552" width="1" height="1" fill="#efefef" stroke="none" stroke-width="1" />
<rect x="548" y="553" width="1" height="1" fill="#adadad" stroke="none" stroke-width="1" />
<rect x="549" y="553" width="1" height="1" fill="#dedede" stroke="none" stroke-width="1" />
<rect x="548" y="554" width="1" height="1" fill="#dedede" stroke="none" stroke-width="1" />
<rect x="547" y="553" width="1" height="1" fill="#efefef" stroke="none" stroke-width="1" />
<rect x="548" y="552" width="1" height="1" fill="#efefef" stroke="none" stroke-width="1" />
<rect x="650" y="553" width="1" height="1" fill="#adadad" stroke="none" stroke-width="1" />
<rect x="651" y="553" width="1" height="1" fill="#dedede" stroke="none" stroke-width="1" />
<rect x="650" y="554" width="1" height="1" fill="#dedede" stroke="none" stroke-width="1" />
<rect x="649" y="553" width="1" height="1" fill="#efefef" stroke="none" stroke-width="1" />
<rect x="650" y="552" width="1" height="1" fill="#efefef" stroke="none" stroke-width="1" />
<rect x="752" y="553" width="1" height="1" fill="#adadad" stroke="none" stroke-width="1" />
<rect x="753" y="553" width="1" height="1" fill="#dedede" stroke="none" stroke-width="1" />
<rect x="752" y="554" width="1" height="1" fill="#dedede" stroke="none" stroke-width="1" />
<rect x="751" y="553" width="1" height="1" fill="#efefef" stroke="none" stroke-width="1" />
<rect x="752" y="552" width="1" height="1" fill="#efefef" stroke="none" stroke-width="1" />
<rect x="854" y="553" width="1" height="1" fill="#adadad" stroke="none" stroke-width="1" />
<rect x="855" y="553" width="1" height="1" fill="#dedede" stroke="none" stroke-width="1" />
<rect x="854" y="554" width="1" height="1" fill="#dedede" stroke="none" stroke-width="1" />
<rect x="853" y="553" width="1" height="1" fill="#efefef" stroke="none" stroke-width="1" />
<rect x="854" y="552" width="1" height="1" fill="#efefef" stroke="none" stroke-width="1" />
<rect x="139" y="137" width="1" height="449" fill="#3f9a4c" stroke="none" stroke-width="1" />
<rect x="853" y="143" width="1" height="443" fill="#2b7038" stroke="none" stroke-width="1" />
<rect x="854" y="143" width="1" height="443" fill="#2b7038" stroke="none" stroke-width="1" opacity="0.25"/>
<rect x="852.5" y="137" width="1.5" height="6" fill="#000" stroke="none" stroke-width="1" />
<path d="M137,137 H245 V168 H137 Z M140,137 V165 H242 V137 Z" fill="url(#hatch)" fill-rule="evenodd"/>
<rect x="140" y="141.5" width="45" height="1.2" fill="#000" stroke="none" stroke-width="1" />
<rect x="197" y="141.5" width="90" height="1.2" fill="#000" stroke="none" stroke-width="1" />
<rect x="299" y="141.5" width="457" height="1.2" fill="#000" stroke="none" stroke-width="1" />
<rect x="184.5" y="136" width="1.2" height="12.5" fill="#000" stroke="none" stroke-width="1" />
<rect x="196.5" y="136" width="1.2" height="12.5" fill="#000" stroke="none" stroke-width="1" />
<text x="173.0 185.0 197.0 209.0" y="159.4" font-size="12" fill="#2a5b75" stroke="#2a5b75" stroke-width="0.15" text-anchor="middle" font-family='"Liberation Sans", "Noto Sans CJK SC", sans-serif' >自动启动</text>
<rect x="287.0" y="136" width="1.2" height="12.5" fill="#000" stroke="none" stroke-width="1" />
<rect x="299.0" y="136" width="1.2" height="12.5" fill="#000" stroke="none" stroke-width="1" />
<rect x="290.0" y="136" width="1.2" height="12.5" fill="#000" stroke="none" stroke-width="1" />
<rect x="755.5" y="137" width="1.2" height="66" fill="#000" stroke="none" stroke-width="1" />
<rect x="849.0" y="137" width="1.2" height="66" fill="#000" stroke="none" stroke-width="1" />
<rect x="756" y="202.5" width="93.5" height="1.2" fill="#000" stroke="none" stroke-width="1" />
<rect x="756" y="165.5" width="93.5" height="1.2" fill="#000" stroke="none" stroke-width="1" />
<rect x="849.5" y="141.5" width="3.5" height="1.2" fill="#000" stroke="none" stroke-width="1" />
<text x="976.9 984.4 991.9 999.4" y="155.0" font-size="12.5" fill="#000" stroke="#000" stroke-width="0.1" text-anchor="middle" font-family='"Liberation Mono", "Noto Sans CJK SC", monospace' transform="scale(0.8,1)" >DIFU</text><text x="805.5 811.5 817.5 823.5" y="155.0" font-size="10.7" fill="#000" stroke="#000" stroke-width="0.1" text-anchor="middle" font-family='"Liberation Sans", "Noto Sans CJK SC", sans-serif' >(13)</text>
<text x="787.5 793.5 799.5 805.5 811.5 817.5" y="177.0" font-size="10.7" fill="#000" stroke="#000" stroke-width="0.1" text-anchor="middle" font-family='"Liberation Sans", "Noto Sans CJK SC", sans-serif' >225.15</text>
<text x="870.0 882.0 894.0 906.0 918.0" y="155.4" font-size="12" fill="#000" stroke="#000" stroke-width="0.15" text-anchor="middle" font-family='"Liberation Sans", "Noto Sans CJK SC", sans-serif' >上升沿微分</text>
<text x="870.0" y="177.4" font-size="12" fill="#000" stroke="#000" stroke-width="0.15" text-anchor="middle" font-family='"Liberation Sans", "Noto Sans CJK SC", sans-serif' >位</text>
<rect x="140" y="227.5" width="45" height="1.2" fill="#000" stroke="none" stroke-width="1" />
<rect x="197" y="227.5" width="90" height="1.2" fill="#000" stroke="none" stroke-width="1" />
<rect x="299" y="227.5" width="90" height="1.2" fill="#000" stroke="none" stroke-width="1" />
<rect x="401" y="227.5" width="90" height="1.2" fill="#000" stroke="none" stroke-width="1" />
<rect x="503" y="227.5" width="294" height="1.2" fill="#000" stroke="none" stroke-width="1" />
<rect x="809" y="227.5" width="44" height="1.2" fill="#000" stroke="none" stroke-width="1" />
<rect x="184.5" y="222" width="1.2" height="12.5" fill="#000" stroke="none" stroke-width="1" />
<rect x="196.5" y="222" width="1.2" height="12.5" fill="#000" stroke="none" stroke-width="1" />
<text x="181.5 187.5 193.5 199.5" y="219.0" font-size="10.7" fill="#000" stroke="#000" stroke-width="0.1" text-anchor="middle" font-family='"Liberation Sans", "Noto Sans CJK SC", sans-serif' >0.11</text>
<text x="185.0 197.0" y="245.4" font-size="12" fill="#2a5b75" stroke="#2a5b75" stroke-width="0.15" text-anchor="middle" font-family='"Liberation Sans", "Noto Sans CJK SC", sans-serif' >检测</text>
<rect x="287.0" y="222" width="1.2" height="12.5" fill="#000" stroke="none" stroke-width="1" />
<rect x="299.0" y="222" width="1.2" height="12.5" fill="#000" stroke="none" stroke-width="1" />
<rect x="290.0" y="222" width="1.2" height="12.5" fill="#000" stroke="none" stroke-width="1" />
<text x="278.0 284.0 290.0 296.0 302.0 308.0" y="219.0" font-size="10.7" fill="#000" stroke="#000" stroke-width="0.1" text-anchor="middle" font-family='"Liberation Sans", "Noto Sans CJK SC", sans-serif' >225.15</text>
<rect x="389.0" y="222" width="1.2" height="12.5" fill="#000" stroke="none" stroke-width="1" />
<rect x="401.0" y="222" width="1.2" height="12.5" fill="#000" stroke="none" stroke-width="1" />
<text x="386.0 392.0 398.0 404.0" y="219.0" font-size="10.7" fill="#000" stroke="#000" stroke-width="0.1" text-anchor="middle" font-family='"Liberation Sans", "Noto Sans CJK SC", sans-serif' >0.10</text>
<text x="389.5 401.5" y="245.4" font-size="12" fill="#2a5b75" stroke="#2a5b75" stroke-width="0.15" text-anchor="middle" font-family='"Liberation Sans", "Noto Sans CJK SC", sans-serif' >吹气</text>
<rect x="491.0" y="222" width="1.2" height="12.5" fill="#000" stroke="none" stroke-width="1" />
<rect x="503.0" y="222" width="1.2" height="12.5" fill="#000" stroke="none" stroke-width="1" />
<line x1="491.5" y1="234.0" x2="503.5" y2="222.5" stroke="#000" stroke-width="1.1" shape-rendering="auto"/>
<text x="482.0 488.0 494.0 500.0 506.0 512.0" y="219.0" font-size="10.7" fill="#000" stroke="#000" stroke-width="0.1" text-anchor="middle" font-family='"Liberation Sans", "Noto Sans CJK SC", sans-serif' >204.04</text>
<circle cx="803" cy="228.2" r="6" fill="#fff" stroke="#000" stroke-width="1.1" shape-rendering="auto"/>
<text x="787.5 793.5 799.5 805.5 811.5 817.5" y="219.0" font-size="10.7" fill="#000" stroke="#000" stroke-width="0.1" text-anchor="middle" font-family='"Liberation Sans", "Noto Sans CJK SC", sans-serif' >204.10</text>
<rect x="852.0" y="224" width="1.2" height="8" fill="#000" stroke="none" stroke-width="1" />
<text x="870.0 882.0 894.0 906.0" y="231.9" font-size="12" fill="#2a5b75" stroke="#2a5b75" stroke-width="0.15" text-anchor="middle" font-family='"Liberation Sans", "Noto Sans CJK SC", sans-serif' >吹气开关</text>
<rect x="140" y="270.5" width="45" height="1.2" fill="#000" stroke="none" stroke-width="1" />
<rect x="197" y="270.5" width="147" height="1.2" fill="#000" stroke="none" stroke-width="1" />
<rect x="184.5" y="265" width="1.2" height="12.5" fill="#000" stroke="none" stroke-width="1" />
<rect x="196.5" y="265" width="1.2" height="12.5" fill="#000" stroke="none" stroke-width="1" />
<text x="175.5 181.5 187.5 193.5 199.5 205.5" y="262.0" font-size="10.7" fill="#000" stroke="#000" stroke-width="0.1" text-anchor="middle" font-family='"Liberation Sans", "Noto Sans CJK SC", sans-serif' >204.10</text>
<text x="173.0 185.0 197.0 209.0" y="288.4" font-size="12" fill="#2a5b75" stroke="#2a5b75" stroke-width="0.15" text-anchor="middle" font-family='"Liberation Sans", "Noto Sans CJK SC", sans-serif' >吹气开关</text>
<rect x="343.5" y="228" width="1.2" height="43.5" fill="#000" stroke="none" stroke-width="1" />
<rect x="140" y="313.5" width="45" height="1.2" fill="#000" stroke="none" stroke-width="1" />
<rect x="197" y="313.5" width="90" height="1.2" fill="#000" stroke="none" stroke-width="1" />
<rect x="299" y="313.5" width="457" height="1.2" fill="#000" stroke="none" stroke-width="1" />
<rect x="184.5" y="308" width="1.2" height="12.5" fill="#000" stroke="none" stroke-width="1" />
<rect x="196.5" y="308" width="1.2" height="12.5" fill="#000" stroke="none" stroke-width="1" />
<text x="175.5 181.5 187.5 193.5 199.5 205.5" y="305.0" font-size="10.7" fill="#000" stroke="#000" stroke-width="0.1" text-anchor="middle" font-family='"Liberation Sans", "Noto Sans CJK SC", sans-serif' >210.00</text>
<text x="173.0 185.0 197.0 209.0" y="331.4" font-size="12" fill="#2a5b75" stroke="#2a5b75" stroke-width="0.15" text-anchor="middle" font-family='"Liberation Sans", "Noto Sans CJK SC", sans-serif' >自动启动</text>
<rect x="287.0" y="308" width="1.2" height="12.5" fill="#000" stroke="none" stroke-width="1" />
<rect x="299.0" y="308" width="1.2" height="12.5" fill="#000" stroke="none" stroke-width="1" />
<rect x="290.0" y="308" width="1.2" height="12.5" fill="#000" stroke="none" stroke-width="1" />
<text x="278.0 284.0 290.0 296.0 302.0 308.0" y="305.0" font-size="10.7" fill="#000" stroke="#000" stroke-width="0.1" text-anchor="middle" font-family='"Liberation Sans", "Noto Sans CJK SC", sans-serif' >225.15</text>
<rect x="755.5" y="308" width="1.2" height="153" fill="#000" stroke="none" stroke-width="1" />
<rect x="849.0" y="308" width="1.2" height="153" fill="#000" stroke="none" stroke-width="1" />
<rect x="756" y="307.5" width="93.5" height="1.2" fill="#000" stroke="none" stroke-width="1" />
<rect x="756" y="460.5" width="93.5" height="1.2" fill="#000" stroke="none" stroke-width="1" />
<rect x="756" y="337.5" width="93.5" height="1.2" fill="#000" stroke="none" stroke-width="1" />
<rect x="849.5" y="313.5" width="3.5" height="1.2" fill="#000" stroke="none" stroke-width="1" />
<text x="980.6 988.1 995.6" y="327.0" font-size="12.5" fill="#000" stroke="#000" stroke-width="0.1" text-anchor="middle" font-family='"Liberation Mono", "Noto Sans CJK SC", monospace' transform="scale(0.8,1)" >SUB</text><text x="802.5 808.5 814.5 820.5" y="327.0" font-size="10.7" fill="#000" stroke="#000" stroke-width="0.1" text-anchor="middle" font-family='"Liberation Sans", "Noto Sans CJK SC", sans-serif' >(31)</text>
<text x="790.5 796.5 802.5 808.5 814.5" y="349.0" font-size="10.7" fill="#000" stroke="#000" stroke-width="0.1" text-anchor="middle" font-family='"Liberation Sans", "Noto Sans CJK SC", sans-serif' >#9999</text>
<text x="988.1 995.6 1003.1" y="392.0" font-size="12.5" fill="#000" stroke="#000" stroke-width="0.1" text-anchor="middle" font-family='"Liberation Mono", "Noto Sans CJK SC", monospace' transform="scale(0.8,1)" >TIM</text><text x="808.5 814.5" y="392.0" font-size="10.7" fill="#000" stroke="#000" stroke-width="0.1" text-anchor="middle" font-family='"Liberation Sans", "Noto Sans CJK SC", sans-serif' >50</text>
<rect x="787.5" y="381.0" width="30.0" height="1.2" fill="#000" stroke="none" stroke-width="1" />
<text x="988.1 995.6" y="435.0" font-size="12.5" fill="#000" stroke="#000" stroke-width="0.1" text-anchor="middle" font-family='"Liberation Mono", "Noto Sans CJK SC", monospace' transform="scale(0.8,1)" >DM</text><text x="802.5 808.5 814.5" y="435.0" font-size="10.7" fill="#000" stroke="#000" stroke-width="0.1" text-anchor="middle" font-family='"Liberation Sans", "Noto Sans CJK SC", sans-serif' >140</text>
<rect x="787.5" y="424.0" width="30.0" height="1.2" fill="#000" stroke="none" stroke-width="1" />
<text x="1083.8 1091.2 1098.8" y="327.0" font-size="12.5" fill="#000" stroke="#000" stroke-width="0.1" text-anchor="middle" font-family='"Liberation Mono", "Noto Sans CJK SC", monospace' transform="scale(0.8,1)" >BCD</text><text x="888.0 900.0" y="327.4" font-size="12" fill="#000" stroke="#000" stroke-width="0.15" text-anchor="middle" font-family='"Liberation Sans", "Noto Sans CJK SC", sans-serif' >码减</text>
<text x="870.0 882.0 894.0 906.0" y="349.4" font-size="12" fill="#000" stroke="#000" stroke-width="0.15" text-anchor="middle" font-family='"Liberation Sans", "Noto Sans CJK SC", sans-serif' >被减数字</text><text x="915.0" y="349.0" font-size="10.7" fill="#000" stroke="#000" stroke-width="0.1" text-anchor="middle" font-family='"Liberation Sans", "Noto Sans CJK SC", sans-serif' >(</text>
<text x="870.0 882.0 894.0" y="392.4" font-size="12" fill="#000" stroke="#000" stroke-width="0.15" text-anchor="middle" font-family='"Liberation Sans", "Noto Sans CJK SC", sans-serif' >减数字</text><text x="903.0" y="392.0" font-size="10.7" fill="#000" stroke="#000" stroke-width="0.1" text-anchor="middle" font-family='"Liberation Sans", "Noto Sans CJK SC", sans-serif' >(</text><text x="1136.2 1143.8" y="392.0" font-size="12.5" fill="#000" stroke="#000" stroke-width="0.1" text-anchor="middle" font-family='"Liberation Mono", "Noto Sans CJK SC", monospace' transform="scale(0.8,1)" >bc</text>
<text x="870.0 882.0 894.0" y="435.4" font-size="12" fill="#000" stroke="#000" stroke-width="0.15" text-anchor="middle" font-family='"Liberation Sans", "Noto Sans CJK SC", sans-serif' >结果字</text>
<rect x="140" y="485.5" width="45" height="1.2" fill="#000" stroke="none" stroke-width="1" />
<rect x="197" y="485.5" width="559" height="1.2" fill="#000" stroke="none" stroke-width="1" />
<rect x="184.5" y="480" width="1.2" height="12.5" fill="#000" stroke="none" stroke-width="1" />
<rect x="196.5" y="480" width="1.2" height="12.5" fill="#000" stroke="none" stroke-width="1" />
<line x1="185.0" y1="492.0" x2="197.0" y2="480.5" stroke="#000" stroke-width="1.1" shape-rendering="auto"/>
<text x="175.5 181.5 187.5 193.5 199.5 205.5" y="477.0" font-size="10.7" fill="#000" stroke="#000" stroke-width="0.1" text-anchor="middle" font-family='"Liberation Sans", "Noto Sans CJK SC", sans-serif' >210.00</text>
<text x="173.0 185.0 197.0 209.0" y="503.4" font-size="12" fill="#2a5b75" stroke="#2a5b75" stroke-width="0.15" text-anchor="middle" font-family='"Liberation Sans", "Noto Sans CJK SC", sans-serif' >自动启动</text>
<rect x="242.0" y="486" width="1.2" height="100" fill="#000" stroke="none" stroke-width="1" />
<rect x="755.5" y="480" width="1.2" height="111" fill="#000" stroke="none" stroke-width="1" />
<rect x="849.0" y="480" width="1.2" height="111" fill="#000" stroke="none" stroke-width="1" />
<rect x="756" y="479.5" width="93.5" height="1.2" fill="#000" stroke="none" stroke-width="1" />
<rect x="756" y="590.5" width="93.5" height="1.2" fill="#000" stroke="none" stroke-width="1" />
<rect x="756" y="509.5" width="93.5" height="1.2" fill="#000" stroke="none" stroke-width="1" />
<rect x="849.5" y="485.5" width="3.5" height="1.2" fill="#000" stroke="none" stroke-width="1" />
<text x="980.6 988.1 995.6" y="499.0" font-size="12.5" fill="#000" stroke="#000" stroke-width="0.1" text-anchor="middle" font-family='"Liberation Mono", "Noto Sans CJK SC", monospace' transform="scale(0.8,1)" >MOV</text><text x="802.5 808.5 814.5 820.5" y="499.0" font-size="10.7" fill="#000" stroke="#000" stroke-width="0.1" text-anchor="middle" font-family='"Liberation Sans", "Noto Sans CJK SC", sans-serif' >(21)</text>
<text x="799.5 805.5" y="521.0" font-size="10.7" fill="#000" stroke="#000" stroke-width="0.1" text-anchor="middle" font-family='"Liberation Sans", "Noto Sans CJK SC", sans-serif' >#0</text>
<text x="988.1 995.6" y="564.0" font-size="12.5" fill="#000" stroke="#000" stroke-width="0.1" text-anchor="middle" font-family='"Liberation Mono", "Noto Sans CJK SC", monospace' transform="scale(0.8,1)" >DM</text><text x="802.5 808.5 814.5" y="564.0" font-size="10.7" fill="#000" stroke="#000" stroke-width="0.1" text-anchor="middle" font-family='"Liberation Sans", "Noto Sans CJK SC", sans-serif' >140</text>
<rect x="787.5" y="553.0" width="30.0" height="1.2" fill="#000" stroke="none" stroke-width="1" />
<text x="870.0 882.0" y="499.4" font-size="12" fill="#000" stroke="#000" stroke-width="0.15" text-anchor="middle" font-family='"Liberation Sans", "Noto Sans CJK SC", sans-serif' >传送</text>
<text x="870.0 882.0" y="521.4" font-size="12" fill="#000" stroke="#000" stroke-width="0.15" text-anchor="middle" font-family='"Liberation Sans", "Noto Sans CJK SC", sans-serif' >源字</text>
<text x="870.0 882.0" y="564.4" font-size="12" fill="#000" stroke="#000" stroke-width="0.15" text-anchor="middle" font-family='"Liberation Sans", "Noto Sans CJK SC", sans-serif' >目标</text>
<text x="89" y="219" font-size="11" font-family='"Liberation Sans", "Noto Sans CJK SC", sans-serif'>1</text>
<text x="111.0 117.0 123.0" y="230.8" font-size="10.7" fill="#000" stroke="#000" stroke-width="0.1" text-anchor="middle" font-family='"Liberation Sans", "Noto Sans CJK SC", sans-serif' >431</text>
<text x="89" y="305" font-size="11" font-family='"Liberation Sans", "Noto Sans CJK SC", sans-serif'>2</text>
<text x="111.0 117.0 123.0" y="316.8" font-size="10.7" fill="#000" stroke="#000" stroke-width="0.1" text-anchor="middle" font-family='"Liberation Sans", "Noto Sans CJK SC", sans-serif' >437</text>
<text x="89" y="477" font-size="11" font-family='"Liberation Sans", "Noto Sans CJK SC", sans-serif'>3</text>
<text x="111.0 117.0 123.0" y="488.8" font-size="10.7" fill="#000" stroke="#000" stroke-width="0.1" text-anchor="middle" font-family='"Liberation Sans", "Noto Sans CJK SC", sans-serif' >440</text>
<path d="M-1,54.5 H1.5 L3.5,56.5 V66.5 H-1" fill="#fff" stroke="#000" stroke-width="1" shape-rendering="auto"/>
<path d="M14.5,66 V57.5 H16 L17,56.5 H20 L21,57.5 H26.5 V60" fill="#ffff99" stroke="#000" stroke-width="1" shape-rendering="auto"/>
<path d="M14.5,66 L18,60.5 H29.5 L26,66 Z" fill="#808000" stroke="#000" stroke-width="1" shape-rendering="auto"/>
<path d="M21.5,55.5 Q24,52.5 27,55 M27.5,53 V56 H24.8" fill="none" stroke="#000" stroke-width="1" shape-rendering="auto"/>
<rect x="37.5" y="53.5" width="13" height="13" fill="#808000" stroke="#000" stroke-width="1" />
<rect x="40" y="54" width="8" height="6" fill="#fff" stroke="none" stroke-width="1" />
<rect x="46.5" y="54.5" width="1.5" height="3" fill="#808000" stroke="none" stroke-width="1" />
<rect x="40" y="61.5" width="8" height="5" fill="#000" stroke="none" stroke-width="1" />
<rect x="45" y="62.5" width="2" height="3.5" fill="#fff" stroke="none" stroke-width="1" />
<rect x="60" y="50" width="1" height="22" fill="#a6a6a6" stroke="none" stroke-width="1" />
<rect x="61" y="50" width="1" height="22" fill="#fafafa" stroke="none" stroke-width="1" />
<path d="M67.5,57.5 H72 L75.5,61 V66.5 H67.5 Z" fill="#fff" stroke="#000" stroke-width="1" shape-rendering="auto"/>
<path d="M75.5,53.5 H80 L82.5,56 V64 H75.5 Z" fill="#fff" stroke="#000" stroke-width="1" shape-rendering="auto"/>
<circle cx="78.5" cy="62.5" r="2.8" fill="#22ccff" stroke="#0000b0" stroke-width="1.2" shape-rendering="auto"/>
<path d="M80.8,64.8 L83.5,67.5" fill="none" stroke="#0000b0" stroke-width="1.8" shape-rendering="auto"/>
<rect x="91" y="50" width="1" height="22" fill="#a6a6a6" stroke="none" stroke-width="1" />
<rect x="92" y="50" width="1" height="22" fill="#fafafa" stroke="none" stroke-width="1" />
<path d="M101.5,58.5 L104,53.5 H112.5 L110.5,58.5" fill="#fff" stroke="#000" stroke-width="1" shape-rendering="auto"/>
<path d="M98.5,58.5 H111 L114,61 V64.5 L111.5,66.5 H98.5 Z" fill="#e8e8e8" stroke="#000" stroke-width="1" shape-rendering="auto"/>
<path d="M98.5,61.5 H114 M100,64.5 H110" fill="none" stroke="#000" stroke-width="1" shape-rendering="auto"/>
<rect x="103" y="62.5" width="5" height="1" fill="#e8e800" stroke="none" stroke-width="1" />
<path d="M104.5,55.5 H110 M103.5,57 H108" fill="none" stroke="#000" stroke-width="0.7" shape-rendering="auto"/>
<path d="M121.5,53.5 H129 L132.5,57 V66.5 H121.5 Z" fill="#fff" stroke="#000" stroke-width="1" shape-rendering="auto"/>
<circle cx="131" cy="61.5" r="3.3" fill="#cfeeff" stroke="#000" stroke-width="1.1" shape-rendering="auto"/>
<path d="M133.5,64 L137,67.5" fill="none" stroke="#000" stroke-width="2" shape-rendering="auto"/>
<rect x="145" y="50" width="1" height="22" fill="#a6a6a6" stroke="none" stroke-width="1" />
<rect x="146" y="50" width="1" height="22" fill="#fafafa" stroke="none" stroke-width="1" />
<path d="M158.2,53.5 L161.8,62.5 M162.6,53.5 L159,62.5" fill="none" stroke="#000" stroke-width="1.4" shape-rendering="auto"/>
<ellipse cx="158" cy="64.4" rx="1.6" ry="2.2" fill="none" stroke="#000090" stroke-width="1.2" shape-rendering="auto"/>
<ellipse cx="162.8" cy="64.4" rx="1.6" ry="2.2" fill="none" stroke="#000090" stroke-width="1.2" shape-rendering="auto"/>
<path d="M176.5,53.5 H182 L184.5,56 V62.5 H176.5 Z" fill="#fff" stroke="#000060" stroke-width="1" shape-rendering="auto"/>
<path d="M182.5,57.5 H188 L190.5,60 V66.5 H182.5 Z" fill="#fff" stroke="#000060" stroke-width="1" shape-rendering="auto"/>
<path d="M178,56.5 H181 M178,58.5 H181 M184,61.5 H189 M184,63.5 H189" fill="none" stroke="#000060" stroke-width="1" />
<path d="M199.5,55.5 H211.5 V66.5 H199.5 Z" fill="#8e8e52" stroke="#000" stroke-width="1" shape-rendering="auto"/>
<path d="M203,55.5 V54.5 H204.5 L205,53.5 H206.5 L207,54.5 H208.5 V56.5 H203 Z" fill="#d8d8a0" stroke="#000" stroke-width="0.8" shape-rendering="auto"/>
<path d="M205.5,59.5 H212 L214.5,62 V66.5 H205.5 Z" fill="#fff" stroke="#000070" stroke-width="1.2" shape-rendering="auto"/>
<path d="M207,62.5 H211 M207,64.5 H212.5" fill="none" stroke="#000070" stroke-width="1" />
<rect x="222" y="50" width="1" height="22" fill="#a6a6a6" stroke="none" stroke-width="1" />
<rect x="223" y="50" width="1" height="22" fill="#fafafa" stroke="none" stroke-width="1" />
<path d="M232,58 Q238,51.5 241.5,56.5 Q243.5,60.5 238.5,62.5" fill="none" stroke="#a9a9a9" stroke-width="1.4" shape-rendering="auto"/>
<path d="M230.5,55 V60 H235.5 Z" fill="#a9a9a9" stroke="none" stroke-width="1" shape-rendering="auto"/>
<rect x="231" y="64.5" width="7" height="1.6" fill="#a9a9a9" stroke="none" stroke-width="1" />
<rect x="239" y="64.5" width="1" height="1.6" fill="#a9a9a9" stroke="none" stroke-width="1" />
<rect x="241" y="64.5" width="1" height="1.6" fill="#a9a9a9" stroke="none" stroke-width="1" />
<rect x="243" y="64.5" width="1" height="1.6" fill="#a9a9a9" stroke="none" stroke-width="1" />
<path d="M265,58 Q259,51.5 255.5,56.5 Q253.5,60.5 258.5,62.5" fill="none" stroke="#a9a9a9" stroke-width="1.4" shape-rendering="auto"/>
<path d="M266.5,55 V60 H261.5 Z" fill="#a9a9a9" stroke="none" stroke-width="1" shape-rendering="auto"/>
<rect x="259" y="64.5" width="7" height="1.6" fill="#a9a9a9" stroke="none" stroke-width="1" />
<rect x="257" y="64.5" width="1" height="1.6" fill="#a9a9a9" stroke="none" stroke-width="1" />
<rect x="255" y="64.5" width="1" height="1.6" fill="#a9a9a9" stroke="none" stroke-width="1" />
<rect x="253" y="64.5" width="1" height="1.6" fill="#a9a9a9" stroke="none" stroke-width="1" />
<rect x="276" y="50" width="1" height="22" fill="#a6a6a6" stroke="none" stroke-width="1" />
<rect x="277" y="50" width="1" height="22" fill="#fafafa" stroke="none" stroke-width="1" />
<g transform="translate(283.5,54.5) scale(1.0)">
<path d="M2.5,0.5 H5 V2 L6.5,5 V12.5 H0 V6.5 L2,2.5 Z M10,0.5 H12.5 L13,2.5 L15,6.5 V12.5 H8.5 V5 L10,2 Z M6.5,4.5 H8.5 V8 H6.5 Z" fill="#000" stroke="none" stroke-width="1" shape-rendering="auto"/>
<rect x="1.5" y="10" width="1" height="1.5" fill="#fff" stroke="none" stroke-width="1" />
<rect x="10" y="10" width="1" height="1.5" fill="#fff" stroke="none" stroke-width="1" />
<rect x="3.2" y="2.5" width="0.8" height="2" fill="#fff" stroke="none" stroke-width="1" />
<rect x="11" y="2.5" width="0.8" height="2" fill="#fff" stroke="none" stroke-width="1" />
</g>
<text x="305.5" y="60.5" font-size="9" font-family='"Liberation Sans", "Noto Sans CJK SC", sans-serif' fill="#000" shape-rendering="auto">A</text>
<text x="315.5" y="67" font-size="9" font-family='"Liberation Sans", "Noto Sans CJK SC", sans-serif' fill="#a9a9a9">B</text>
<path d="M308,62 Q308,66 313,66" fill="none" stroke="#000" stroke-width="1.2" stroke-dasharray="1.2,1.2" shape-rendering="auto"/>
<path d="M312.5,63.5 L315.5,66 L312.5,68 Z" fill="#000" stroke="none" stroke-width="1" shape-rendering="auto"/>
<path d="M320,61 Q320,55.5 316,55.5" fill="none" stroke="#000" stroke-width="1.2" stroke-dasharray="1.2,1.2" shape-rendering="auto"/>
<path d="M317.5,53.5 H320.5 V56.5" fill="none" stroke="#000" stroke-width="1" shape-rendering="auto"/>
<rect x="329.5" y="54" width="9" height="4.5" rx="2" fill="#fff" stroke="#000" stroke-width="1.5" shape-rendering="auto"/>
<rect x="333.5" y="54.5" width="1" height="4" fill="#000" stroke="none" stroke-width="1" />
<path d="M333,60 Q333,66 338,66" fill="none" stroke="#000" stroke-width="1.2" stroke-dasharray="1.2,1.2" shape-rendering="auto"/>
<path d="M336.5,63.5 L339.5,66 L336.5,68 Z" fill="#000" stroke="none" stroke-width="1" shape-rendering="auto"/>
<path d="M342,55.5 Q345,56 344,61" fill="none" stroke="#000" stroke-width="1.2" stroke-dasharray="1.2,1.2" shape-rendering="auto"/>
<path d="M341.5,53.5 H344.5 V56.5" fill="none" stroke="#000" stroke-width="1" shape-rendering="auto"/>
<rect x="339.5" y="62.5" width="6.5" height="4.5" rx="1.5" fill="#d0d0d0" stroke="#a9a9a9" stroke-width="1.2" shape-rendering="auto"/>
<rect x="353" y="50" width="1" height="22" fill="#a6a6a6" stroke="none" stroke-width="1" />
<rect x="354" y="50" width="1" height="22" fill="#fafafa" stroke="none" stroke-width="1" />
<text x="367.8" y="66.5" font-size="16" font-weight="bold" text-anchor="middle" font-family='"Liberation Sans", "Noto Sans CJK SC", sans-serif' fill="#ffff00" stroke="#000" stroke-width="1" paint-order="stroke" shape-rendering="auto">?</text>
<path d="M383.5,54 V65 L386,62.5 L388,67 L389.8,66.2 L387.8,62 H391.5 Z" fill="#000" stroke="none" stroke-width="1" shape-rendering="auto"/>
<text x="395.5" y="64.5" font-size="15" font-weight="bold" text-anchor="middle" font-family='"Liberation Sans", "Noto Sans CJK SC", sans-serif' fill="#000080" shape-rendering="auto">?</text>
<rect x="408" y="47" width="1" height="28" fill="#a6a6a6" stroke="none" stroke-width="1" />
<rect x="409" y="47" width="1" height="28" fill="#fafafa" stroke="none" stroke-width="1" />
<rect x="414" y="48" width="1" height="25" fill="#fdfdfd" stroke="none" stroke-width="1" />
<rect x="415" y="48" width="1" height="25" fill="#fdfdfd" stroke="none" stroke-width="1" />
<rect x="416" y="48" width="1" height="25" fill="#a4a4a4" stroke="none" stroke-width="1" />
<rect x="414" y="73" width="3" height="1" fill="#a4a4a4" stroke="none" stroke-width="1" />
<rect x="418" y="48" width="1" height="25" fill="#fdfdfd" stroke="none" stroke-width="1" />
<rect x="419" y="48" width="1" height="25" fill="#fdfdfd" stroke="none" stroke-width="1" />
<rect x="420" y="48" width="1" height="25" fill="#a4a4a4" stroke="none" stroke-width="1" />
<rect x="418" y="73" width="3" height="1" fill="#a4a4a4" stroke="none" stroke-width="1" />
<g transform="translate(427,54) scale(1.0)">
<path d="M7,0.8 L13.2,11.5 H0.8 Z" fill="#ffff00" stroke="#000" stroke-width="1.1" stroke-linejoin="round" shape-rendering="auto"/>
<path d="M7.6,3.8 L5.8,7 H8 L6.6,9.8" fill="none" stroke="#000" stroke-width="1.1" shape-rendering="auto"/>
</g>
<path d="M453,54 H458 L456,57 H460 L455,62.5 L456.5,58.5 H452.5 Z" fill="#a9a9a9" stroke="#a9a9a9" stroke-width="1" shape-rendering="auto"/>
<path d="M448.6,67.6 v-3.2 q0.2,-0.8 1,-0.8 M451.3,67.4 c-1.6,-0.8 -1.4,-4 1.4,-4 c2.8,0 3,3.2 1.4,4 M454.9,67.6 v-3.2 q0.2,-0.8 1,-0.8 M457.6,67.4 c-1.6,-0.8 -1.4,-4 1.4,-4 c2.8,0 3,3.2 1.4,4 M461.2,67.6 v-3.2 q0.2,-0.8 1,-0.8" fill="none" stroke="#a9a9a9" stroke-width="1.1" shape-rendering="auto"/>
<path d="M474,54.5 H485 Q487,54.5 487,57 V58.5 H484 V64 Q484,66.5 481.5,66.5 H476 M474,54.5 Q471.5,54.5 471.5,57 Q471.5,59 474,59 H476 V66.5 " fill="#c8c8c8" stroke="#a9a9a9" stroke-width="1.6" shape-rendering="auto"/>
<rect x="478.5" y="58" width="5" height="4" fill="#f0f0f0" stroke="#a9a9a9" stroke-width="1.2" />
<g transform="translate(494,53.5) scale(0.66)">
<path d="M2.5,0.5 H5 V2 L6.5,5 V12.5 H0 V6.5 L2,2.5 Z M10,0.5 H12.5 L13,2.5 L15,6.5 V12.5 H8.5 V5 L10,2 Z M6.5,4.5 H8.5 V8 H6.5 Z" fill="#000" stroke="none" stroke-width="1" shape-rendering="auto"/>
<rect x="1.5" y="10" width="1" height="1.5" fill="#fff" stroke="none" stroke-width="1" />
<rect x="10" y="10" width="1" height="1.5" fill="#fff" stroke="none" stroke-width="1" />
<rect x="3.2" y="2.5" width="0.8" height="2" fill="#fff" stroke="none" stroke-width="1" />
<rect x="11" y="2.5" width="0.8" height="2" fill="#fff" stroke="none" stroke-width="1" />
</g>
<g transform="translate(501,59.5) scale(0.62)">
<path d="M7,0.8 L13.2,11.5 H0.8 Z" fill="#ffff00" stroke="#000" stroke-width="1.1" stroke-linejoin="round" shape-rendering="auto"/>
<path d="M7.6,3.8 L5.8,7 H8 L6.6,9.8" fill="none" stroke="#000" stroke-width="1.1" shape-rendering="auto"/>
</g>
<rect x="518" y="50" width="1" height="22" fill="#a6a6a6" stroke="none" stroke-width="1" />
<rect x="519" y="50" width="1" height="22" fill="#fafafa" stroke="none" stroke-width="1" />
<rect x="530.4" y="54" width="2" height="6" fill="#a9a9a9" stroke="none" stroke-width="1" />
<rect x="533.4" y="54" width="2" height="6" fill="#a9a9a9" stroke="none" stroke-width="1" />
<path d="M525.6,67.6 v-3.2 q0.2,-0.8 1,-0.8 M528.3,67.4 c-1.6,-0.8 -1.4,-4 1.4,-4 c2.8,0 3,3.2 1.4,4 M531.9,67.6 v-3.2 q0.2,-0.8 1,-0.8 M534.6,67.4 c-1.6,-0.8 -1.4,-4 1.4,-4 c2.8,0 3,3.2 1.4,4 M538.2,67.6 v-3.2 q0.2,-0.8 1,-0.8" fill="none" stroke="#a9a9a9" stroke-width="1.1" shape-rendering="auto"/>
<rect x="552" y="55" width="3.2" height="10.5" fill="#a9a9a9" stroke="none" stroke-width="1" />
<rect x="557" y="55" width="3.2" height="10.5" fill="#a9a9a9" stroke="none" stroke-width="1" />
<rect x="572" y="50" width="1" height="22" fill="#a6a6a6" stroke="none" stroke-width="1" />
<rect x="573" y="50" width="1" height="22" fill="#fafafa" stroke="none" stroke-width="1" />
<path d="M579.5,54.0 h6 l3,3 v9 h-9 Z" fill="#f0f0f0" stroke="#a9a9a9" stroke-width="1" shape-rendering="auto"/>
<path d="M581.5,56 V63 M583.5,58 H586 M581.5,63 H585" fill="none" stroke="#a9a9a9" stroke-width="1" shape-rendering="auto"/>
<rect x="586.5" y="63.0" width="8" height="4" rx="2" fill="#f0f0f0" stroke="#a9a9a9" stroke-width="1.2" shape-rendering="auto"/>
<rect x="590.0" y="63.5" width="1" height="3" fill="#a9a9a9" stroke="none" stroke-width="1" />
<rect x="602.5" y="63.0" width="8" height="4" rx="2" fill="#f0f0f0" stroke="#a9a9a9" stroke-width="1.2" shape-rendering="auto"/>
<rect x="606.0" y="63.5" width="1" height="3" fill="#a9a9a9" stroke="none" stroke-width="1" />
<path d="M608.5,54.0 h6 l3,3 v9 h-9 Z" fill="#f0f0f0" stroke="#a9a9a9" stroke-width="1" shape-rendering="auto"/>
<path d="M613,63 V58 M611,60 L613,57.5 L615,60" fill="none" stroke="#a9a9a9" stroke-width="1" shape-rendering="auto"/>
<rect x="625.5" y="59.5" width="7" height="7" fill="none" stroke="#a9a9a9" stroke-width="1" />
<path d="M631,54 H640 V58 H631 Z" fill="#f0f0f0" stroke="#a9a9a9" stroke-width="1.2" shape-rendering="auto"/>
<rect x="634" y="54" width="1" height="4" fill="#a9a9a9" stroke="none" stroke-width="1" />
<rect x="637" y="54" width="1" height="4" fill="#a9a9a9" stroke="none" stroke-width="1" />
<circle cx="635" cy="60.5" r="2.8" fill="#f0f0f0" stroke="#a9a9a9" stroke-width="1.1" shape-rendering="auto"/>
<path d="M637,62.5 L641,66.5" fill="none" stroke="#a9a9a9" stroke-width="1.5" shape-rendering="auto"/>
<rect x="649" y="50" width="1" height="22" fill="#a6a6a6" stroke="none" stroke-width="1" />
<rect x="650" y="50" width="1" height="22" fill="#fafafa" stroke="none" stroke-width="1" />
<path d="M659,57 l2,-2 l2,1 l2,-2 l3,2 l-1,3 l2,2 l-3,2 l-1,-2 l-3,2 l-1,-3 l-2,-1 Z" fill="#a9a9a9" stroke="#a9a9a9" stroke-width="1" shape-rendering="auto"/>
<path d="M658.5,60 V65.5 M657,64 L658.5,66 L660.5,64" fill="none" stroke="#a9a9a9" stroke-width="1" shape-rendering="auto"/>
<rect x="663.5" y="63.0" width="8" height="4" rx="2" fill="#f0f0f0" stroke="#a9a9a9" stroke-width="1.2" shape-rendering="auto"/>
<rect x="667.0" y="63.5" width="1" height="3" fill="#a9a9a9" stroke="none" stroke-width="1" />
<path d="M686,57 l2,-2 l2,1 l2,-2 l3,2 l-1,3 l2,2 l-3,2 l-1,-2 l-3,2 l-1,-3 l-2,-1 Z" fill="#a9a9a9" stroke="#a9a9a9" stroke-width="1" shape-rendering="auto"/>
<rect x="679.5" y="63.0" width="8" height="4" rx="2" fill="#f0f0f0" stroke="#a9a9a9" stroke-width="1.2" shape-rendering="auto"/>
<rect x="683.0" y="63.5" width="1" height="3" fill="#a9a9a9" stroke="none" stroke-width="1" />
<path d="M691.5,66.5 V61 M689.5,63 L691.5,60.5 L693.5,63" fill="none" stroke="#a9a9a9" stroke-width="1" shape-rendering="auto"/>
<path d="M703,62 l2,-2 l2,1 l2,-2 l3,2 l-1,3 l2,2 l-3,2 l-1,-2 l-3,2 l-1,-3 l-2,-1 Z" fill="#a9a9a9" stroke="#a9a9a9" stroke-width="1" shape-rendering="auto"/>
<path d="M708,54 H717 V58 H708 Z" fill="#f0f0f0" stroke="#a9a9a9" stroke-width="1.2" shape-rendering="auto"/>
<rect x="711" y="54" width="1" height="4" fill="#a9a9a9" stroke="none" stroke-width="1" />
<rect x="714" y="54" width="1" height="4" fill="#a9a9a9" stroke="none" stroke-width="1" />
<circle cx="712" cy="60.5" r="2.8" fill="#f0f0f0" stroke="#a9a9a9" stroke-width="1.1" shape-rendering="auto"/>
<path d="M714,62.5 L718,66.5" fill="none" stroke="#a9a9a9" stroke-width="1.5" shape-rendering="auto"/>
<rect x="726" y="50" width="1" height="22" fill="#a6a6a6" stroke="none" stroke-width="1" />
<rect x="727" y="50" width="1" height="22" fill="#fafafa" stroke="none" stroke-width="1" />
<rect x="733.5" y="53.5" width="15.5" height="8" rx="1.5" fill="#f4f4f4" stroke="#a9a9a9" stroke-width="1.2" shape-rendering="auto"/>
<rect x="733.5" y="53.5" width="15.5" height="2" fill="#a9a9a9" stroke="none" stroke-width="1" />
<rect x="738.5" y="55" width="1" height="6" fill="#a9a9a9" stroke="none" stroke-width="1" />
<rect x="743.5" y="55" width="1" height="6" fill="#a9a9a9" stroke="none" stroke-width="1" />
<rect x="735.5" y="57" width="1.5" height="2.5" fill="#a9a9a9" stroke="none" stroke-width="1" />
<path d="M736,63 H749 L746,67 H733 Z" fill="#a9a9a9" stroke="none" stroke-width="1" shape-rendering="auto"/>
<rect x="756.5" y="53.5" width="15.5" height="8" rx="1.5" fill="#f4f4f4" stroke="#a9a9a9" stroke-width="1.2" shape-rendering="auto"/>
<rect x="756.5" y="53.5" width="15.5" height="2" fill="#a9a9a9" stroke="none" stroke-width="1" />
<rect x="761.5" y="55" width="1" height="6" fill="#a9a9a9" stroke="none" stroke-width="1" />
<rect x="766.5" y="55" width="1" height="6" fill="#a9a9a9" stroke="none" stroke-width="1" />
<rect x="758.5" y="57" width="1.5" height="2.5" fill="#a9a9a9" stroke="none" stroke-width="1" />
<path d="M756.5,63.5 l2.5,3 l2.5,-3 l2.5,3 l2.5,-3 l2.5,3 l2,-2" fill="none" stroke="#a9a9a9" stroke-width="1" shape-rendering="auto"/>
<rect x="779.0" y="53.5" width="15.5" height="8" rx="1.5" fill="#f4f4f4" stroke="#a9a9a9" stroke-width="1.2" shape-rendering="auto"/>
<rect x="779.0" y="53.5" width="15.5" height="2" fill="#a9a9a9" stroke="none" stroke-width="1" />
<rect x="784.0" y="55" width="1" height="6" fill="#a9a9a9" stroke="none" stroke-width="1" />
<rect x="789.0" y="55" width="1" height="6" fill="#a9a9a9" stroke="none" stroke-width="1" />
<rect x="781.0" y="57" width="1.5" height="2.5" fill="#a9a9a9" stroke="none" stroke-width="1" />
<path d="M779.6,67.6 v-3.2 q0.2,-0.8 1,-0.8 M782.3,67.4 c-1.6,-0.8 -1.4,-4 1.4,-4 c2.8,0 3,3.2 1.4,4 M785.9,67.6 v-3.2 q0.2,-0.8 1,-0.8 M788.6,67.4 c-1.6,-0.8 -1.4,-4 1.4,-4 c2.8,0 3,3.2 1.4,4 M792.2,67.6 v-3.2 q0.2,-0.8 1,-0.8" fill="none" stroke="#a9a9a9" stroke-width="1.1" shape-rendering="auto"/>
<rect x="802.0" y="53.5" width="15.5" height="8" rx="1.5" fill="#f4f4f4" stroke="#a9a9a9" stroke-width="1.2" shape-rendering="auto"/>
<rect x="802.0" y="53.5" width="15.5" height="2" fill="#a9a9a9" stroke="none" stroke-width="1" />
<rect x="807.0" y="55" width="1" height="6" fill="#a9a9a9" stroke="none" stroke-width="1" />
<rect x="812.0" y="55" width="1" height="6" fill="#a9a9a9" stroke="none" stroke-width="1" />
<rect x="804.0" y="57" width="1.5" height="2.5" fill="#a9a9a9" stroke="none" stroke-width="1" />
<path d="M803,65.5 H816 M803,65.5 l2,-2 M816,65.5 l-2,-2 M816,65.5 l-2,1.5" fill="none" stroke="#a9a9a9" stroke-width="1" stroke-dasharray="2,1.5" shape-rendering="auto"/>
<rect x="826" y="50" width="1" height="22" fill="#a6a6a6" stroke="none" stroke-width="1" />
<rect x="827" y="50" width="1" height="22" fill="#fafafa" stroke="none" stroke-width="1" />
<path d="M837,60.5 H842 V54.5 H846.5" fill="none" stroke="#a9a9a9" stroke-width="1.1" shape-rendering="auto"/>
<path d="M834.1,67.6 v-3.2 q0.2,-0.8 1,-0.8 M836.8,67.4 c-1.6,-0.8 -1.4,-4 1.4,-4 c2.8,0 3,3.2 1.4,4 M840.4,67.6 v-3.2 q0.2,-0.8 1,-0.8 M843.1,67.4 c-1.6,-0.8 -1.4,-4 1.4,-4 c2.8,0 3,3.2 1.4,4 M846.7,67.6 v-3.2 q0.2,-0.8 1,-0.8" fill="none" stroke="#a9a9a9" stroke-width="1.1" shape-rendering="auto"/>
<path d="M859.5,55.5 V63 M861.5,55.5 V63 M864.5,57.5 V63 M867.5,57.5 V63 M870.5,57.5 V63 M858.5,63.5 H871.5 M860.5,63.5 V66.5 H863.5 V63.5 M865.5,63.5 V66.5 H868.5 V63.5" fill="none" stroke="#000" stroke-width="1.25" shape-rendering="auto"/>
<rect x="880" y="50" width="1" height="22" fill="#a6a6a6" stroke="none" stroke-width="1" />
<rect x="881" y="50" width="1" height="22" fill="#fafafa" stroke="none" stroke-width="1" />
<circle cx="890.5" cy="57.3" r="3" fill="#a9a9a9" shape-rendering="auto"/>
<path d="M893,57.2 H899.5 V62" fill="none" stroke="#a9a9a9" stroke-width="1.2" shape-rendering="auto"/>
<rect x="895.0" y="63.0" width="8" height="4" rx="2" fill="#f0f0f0" stroke="#a9a9a9" stroke-width="1.2" shape-rendering="auto"/>
<rect x="898.5" y="63.5" width="1" height="3" fill="#a9a9a9" stroke="none" stroke-width="1" />
<rect x="911.5" y="63.0" width="8" height="4" rx="2" fill="#f0f0f0" stroke="#a9a9a9" stroke-width="1.2" shape-rendering="auto"/>
<rect x="915.0" y="63.5" width="1" height="3" fill="#a9a9a9" stroke="none" stroke-width="1" />
<rect x="915.5" y="56.5" width="3" height="5.5" fill="#a9a9a9" stroke="none" stroke-width="1" />
<path d="M-1,91 L2.5,94.5" fill="none" stroke="#000" stroke-width="1.8" shape-rendering="auto"/>
<path d="M12.5,93 L14.5,95 L27,82.5" fill="none" stroke="#ffff58" stroke-width="2" shape-rendering="auto"/>
<circle cx="17" cy="86.8" r="3.6" fill="none" stroke="#000" stroke-width="1.3" shape-rendering="auto"/>
<path d="M19.8,89.8 L27,96.8" fill="none" stroke="#000" stroke-width="2.2" shape-rendering="auto"/>
<circle cx="42" cy="89" r="5.6" fill="#fcfcfc" stroke="#000" stroke-width="1.2" shape-rendering="auto"/>
<path d="M39.5,90.5 Q42,93 44.5,90.5" fill="none" stroke="#b8b8b8" stroke-width="1" shape-rendering="auto"/>
<path d="M46,93 L50.5,97.5" fill="none" stroke="#000" stroke-width="2.2" shape-rendering="auto"/>
<rect x="60" y="80" width="1" height="22" fill="#a6a6a6" stroke="none" stroke-width="1" />
<rect x="61" y="80" width="1" height="22" fill="#fafafa" stroke="none" stroke-width="1" />
<rect x="64" y="80" width="22" height="21" fill="#fafafa" stroke="none" stroke-width="1" />
<rect x="64" y="80" width="22" height="1" fill="#a4a4a4" stroke="none" stroke-width="1" />
<rect x="64" y="80" width="1" height="21" fill="#a4a4a4" stroke="none" stroke-width="1" />
<rect x="64" y="100" width="22" height="1" fill="#fdfdfd" stroke="none" stroke-width="1" />
<rect x="85" y="80" width="1" height="21" fill="#fdfdfd" stroke="none" stroke-width="1" />
<rect x="70" y="85" width="1" height="1" fill="#000" stroke="none" stroke-width="1" />
<rect x="73" y="85" width="1" height="1" fill="#000" stroke="none" stroke-width="1" />
<rect x="76" y="85" width="1" height="1" fill="#000" stroke="none" stroke-width="1" />
<rect x="79" y="85" width="1" height="1" fill="#000" stroke="none" stroke-width="1" />
<rect x="82" y="85" width="1" height="1" fill="#000" stroke="none" stroke-width="1" />
<rect x="70" y="89" width="1" height="1" fill="#000" stroke="none" stroke-width="1" />
<rect x="73" y="89" width="1" height="1" fill="#000" stroke="none" stroke-width="1" />
<rect x="76" y="89" width="1" height="1" fill="#000" stroke="none" stroke-width="1" />
<rect x="79" y="89" width="1" height="1" fill="#000" stroke="none" stroke-width="1" />
<rect x="82" y="89" width="1" height="1" fill="#000" stroke="none" stroke-width="1" />
<rect x="70" y="93" width="1" height="1" fill="#000" stroke="none" stroke-width="1" />
<rect x="73" y="93" width="1" height="1" fill="#000" stroke="none" stroke-width="1" />
<rect x="76" y="93" width="1" height="1" fill="#000" stroke="none" stroke-width="1" />
<rect x="79" y="93" width="1" height="1" fill="#000" stroke="none" stroke-width="1" />
<rect x="82" y="93" width="1" height="1" fill="#000" stroke="none" stroke-width="1" />
<rect x="70" y="97" width="1" height="1" fill="#000" stroke="none" stroke-width="1" />
<rect x="73" y="97" width="1" height="1" fill="#000" stroke="none" stroke-width="1" />
<rect x="76" y="97" width="1" height="1" fill="#000" stroke="none" stroke-width="1" />
<rect x="79" y="97" width="1" height="1" fill="#000" stroke="none" stroke-width="1" />
<rect x="82" y="97" width="1" height="1" fill="#000" stroke="none" stroke-width="1" />
<rect x="87" y="80" width="22" height="21" fill="#fafafa" stroke="none" stroke-width="1" />
<rect x="87" y="80" width="22" height="1" fill="#a4a4a4" stroke="none" stroke-width="1" />
<rect x="87" y="80" width="1" height="21" fill="#a4a4a4" stroke="none" stroke-width="1" />
<rect x="87" y="100" width="22" height="1" fill="#fdfdfd" stroke="none" stroke-width="1" />
<rect x="108" y="80" width="1" height="21" fill="#fdfdfd" stroke="none" stroke-width="1" />
<ellipse cx="99.5" cy="87.5" rx="7" ry="3.6" fill="#fff" stroke="#000" stroke-width="1" shape-rendering="auto"/>
<path d="M103,90.5 L106,93.5 L105,89.5" fill="#fff" stroke="#000" stroke-width="1" shape-rendering="auto"/>
<path d="M96.5,86.5 l1,2 l1,-2 l1,2 l1,-2" fill="none" stroke="#000" stroke-width="0.8" shape-rendering="auto"/>
<rect x="91.5" y="93.5" width="11" height="5" rx="1.5" fill="#ffff80" stroke="#707000" stroke-width="1.1" shape-rendering="auto"/>
<path d="M101,96 L103,97.5 L105.5,94" fill="none" stroke="#000" stroke-width="1.2" shape-rendering="auto"/>
<rect x="110" y="80" width="22" height="21" fill="#fafafa" stroke="none" stroke-width="1" />
<rect x="110" y="80" width="22" height="1" fill="#a4a4a4" stroke="none" stroke-width="1" />
<rect x="110" y="80" width="1" height="21" fill="#a4a4a4" stroke="none" stroke-width="1" />
<rect x="110" y="100" width="22" height="1" fill="#fdfdfd" stroke="none" stroke-width="1" />
<rect x="131" y="80" width="1" height="21" fill="#fdfdfd" stroke="none" stroke-width="1" />
<path d="M116.5,85.0 l1.8,1.8 l-1.8,1.8 l-1.8,-1.8 Z" fill="#000080" stroke="none" stroke-width="1" shape-rendering="auto"/>
<rect x="121" y="86.0" width="8" height="1" fill="#b0b0b0" stroke="none" stroke-width="1" />
<rect x="122" y="87.2" width="6" height="1" fill="#d0d0d0" stroke="none" stroke-width="1" />
<path d="M116.5,90.0 l1.8,1.8 l-1.8,1.8 l-1.8,-1.8 Z" fill="#000080" stroke="none" stroke-width="1" shape-rendering="auto"/>
<rect x="121" y="91.0" width="8" height="1" fill="#b0b0b0" stroke="none" stroke-width="1" />
<rect x="122" y="92.2" width="6" height="1" fill="#d0d0d0" stroke="none" stroke-width="1" />
<path d="M116.5,95.0 l1.8,1.8 l-1.8,1.8 l-1.8,-1.8 Z" fill="#000080" stroke="none" stroke-width="1" shape-rendering="auto"/>
<rect x="121" y="96.0" width="8" height="1" fill="#b0b0b0" stroke="none" stroke-width="1" />
<rect x="122" y="97.2" width="6" height="1" fill="#d0d0d0" stroke="none" stroke-width="1" />
<rect x="136.5" y="83" width="1.8" height="14.5" fill="#30a030" stroke="none" stroke-width="1" />
<rect x="150.5" y="83" width="1.8" height="14.5" fill="#30a030" stroke="none" stroke-width="1" />
<path d="M138,87 H141 M141.5,84.5 V89.5 M146.5,84.5 V89.5 M147,87 H150.5 M138,93.5 H144 M148.5,93.5 H150.5" fill="none" stroke="#000" stroke-width="1.6" />
<rect x="146.8" y="85.5" width="2.4" height="3" fill="#000" stroke="none" stroke-width="1" />
<rect x="138.8" y="92.3" width="2.4" height="2.6" fill="#000" stroke="none" stroke-width="1" />
<circle cx="146" cy="93.5" r="2.2" fill="#fff" stroke="#000" stroke-width="1.3" shape-rendering="auto"/>
<rect x="156" y="80" width="22" height="21" fill="#fafafa" stroke="none" stroke-width="1" />
<rect x="156" y="80" width="22" height="1" fill="#a4a4a4" stroke="none" stroke-width="1" />
<rect x="156" y="80" width="1" height="21" fill="#a4a4a4" stroke="none" stroke-width="1" />
<rect x="156" y="100" width="22" height="1" fill="#fdfdfd" stroke="none" stroke-width="1" />
<rect x="177" y="80" width="1" height="21" fill="#fdfdfd" stroke="none" stroke-width="1" />
<rect x="160" y="84" width="2" height="14.5" fill="#20a020" stroke="none" stroke-width="1" />
<rect x="163.5" y="84.5" width="12" height="13.5" fill="#ffff00" stroke="none" stroke-width="1" />
<path d="M164.5,86 v-1.5 h1.5 M175,86 v-1.5 h-1.5 M164.5,86 v1.5 h1.5 M175,86 v1.5 h-1.5" fill="none" stroke="#000" stroke-width="1" />
<path d="M167,84.7 H173" fill="none" stroke="#000" stroke-width="1.2" stroke-dasharray="1.3,1"/>
<path d="M164.5,91.5 v-1.5 h1.5 M175,91.5 v-1.5 h-1.5 M164.5,91.5 v1.5 h1.5 M175,91.5 v1.5 h-1.5" fill="none" stroke="#000" stroke-width="1" />
<path d="M167,90.2 H173" fill="none" stroke="#000" stroke-width="1.2" stroke-dasharray="1.3,1"/>
<path d="M164.5,96.5 v-1.5 h1.5 M175,96.5 v-1.5 h-1.5 M164.5,96.5 v1.5 h1.5 M175,96.5 v1.5 h-1.5" fill="none" stroke="#000" stroke-width="1" />
<path d="M167,95.2 H173" fill="none" stroke="#000" stroke-width="1.2" stroke-dasharray="1.3,1"/>
<path d="M182.5,84.5 H186 M185.5,84.5 V96 M185.5,90.5 H189 M188.5,90.5 V96 H191" fill="none" stroke="#000" stroke-width="1.4" />
<rect x="186.5" y="83.5" width="7" height="3" fill="#40d040" stroke="#108010" stroke-width="1" />
<rect x="189.5" y="89.5" width="7" height="3" fill="#40d040" stroke="#108010" stroke-width="1" />
<rect x="191.5" y="94.5" width="6" height="3" fill="#40d040" stroke="#108010" stroke-width="1" />
<rect x="206" y="80" width="1" height="22" fill="#a6a6a6" stroke="none" stroke-width="1" />
<rect x="207" y="80" width="1" height="22" fill="#fafafa" stroke="none" stroke-width="1" />
<rect x="210" y="80" width="22" height="21" fill="#fafafa" stroke="none" stroke-width="1" />
<rect x="210" y="80" width="22" height="1" fill="#a4a4a4" stroke="none" stroke-width="1" />
<rect x="210" y="80" width="1" height="21" fill="#a4a4a4" stroke="none" stroke-width="1" />
<rect x="210" y="100" width="22" height="1" fill="#fdfdfd" stroke="none" stroke-width="1" />
<rect x="231" y="80" width="1" height="21" fill="#fdfdfd" stroke="none" stroke-width="1" />
<path d="M216.5,84.5 V96 L219,93.5 L221,98 L223,97 L221,92.8 H224.8 Z" fill="#fff" stroke="#000" stroke-width="1.2" shape-rendering="auto"/>
<path d="M236,90.5 H241.5 M241.5,85 V96 M248,85 V96 M248,90.5 H252.5" fill="none" stroke="#000" stroke-width="1.45" shape-rendering="auto"/>
<path d="M259,90.5 H264 M264,85 V96 M270,85 V96 M270,90.5 H275" fill="none" stroke="#000" stroke-width="1.45" shape-rendering="auto"/>
<path d="M264,96 L270,85" fill="none" stroke="#000" stroke-width="1.6" shape-rendering="auto"/>
<path d="M283,84 V90.5 H287.5 M287.5,84 V96 M292.5,84 V96 M292.5,90.5 H297 V84" fill="none" stroke="#000" stroke-width="1.45" shape-rendering="auto"/>
<path d="M306,84 V90.5 H310 M310,84 V96 M315,84 V96 M315,90.5 H319.5 V84" fill="none" stroke="#000" stroke-width="1.45" shape-rendering="auto"/>
<path d="M310,96 L315,84" fill="none" stroke="#000" stroke-width="1.6" shape-rendering="auto"/>
<path d="M335.8,84 V96.5" fill="none" stroke="#000" stroke-width="1.45" shape-rendering="auto"/>
<path d="M351,90 H366.5" fill="none" stroke="#000" stroke-width="1.45" shape-rendering="auto"/>
<path d="M374,90.5 H377 M386.5,90.5 H390" fill="none" stroke="#000" stroke-width="1.45" shape-rendering="auto"/>
<circle cx="381.7" cy="90.5" r="4.8" fill="none" stroke="#000" stroke-width="1.5" shape-rendering="auto"/>
<path d="M397,90.5 H400 M409.5,90.5 H413" fill="none" stroke="#000" stroke-width="1.45" shape-rendering="auto"/>
<circle cx="404.8" cy="90.5" r="4.8" fill="none" stroke="#000" stroke-width="1.5" shape-rendering="auto"/>
<path d="M399,96.5 L411,84" fill="none" stroke="#000" stroke-width="1.6" shape-rendering="auto"/>
<path d="M420.5,87.5 H436 M424.5,84 H432.5 V96.5 H424.5 Z M424.5,91.5 H432.5" fill="none" stroke="#000" stroke-width="1.6" shape-rendering="auto"/>
<path d="M444,87.5 H459 M444,91.5 H459 M444,94.5 H459 M448,84 H456 V96.5 H448 Z" fill="none" stroke="#a9a9a9" stroke-width="1.4" shape-rendering="auto"/>
<path d="M467,87.5 H482 M476,84 V96.5 M476,84 H482 M476,96.5 H482 M476,91.5 H481" fill="none" stroke="#a9a9a9" stroke-width="1.4" shape-rendering="auto"/>
<path d="M470,88.5 L475,92 L470,95.5 Z" fill="#a9a9a9" stroke="none" stroke-width="1" shape-rendering="auto"/>
<path d="M491.8,83.5 V92.5 H505.5" fill="none" stroke="#000" stroke-width="1.45" shape-rendering="auto"/>
<path d="M514.5,83.5 V92.5 H527.5" fill="none" stroke="#000" stroke-width="1.45" shape-rendering="auto"/>
<path d="M517,86.5 L527,96.5 M527,86.5 L517,96.5" fill="none" stroke="#e00000" stroke-width="2" shape-rendering="auto"/>
<rect x="413" y="108" width="1" height="25" fill="#fdfdfd" stroke="none" stroke-width="1" />
<rect x="414" y="108" width="1" height="25" fill="#fdfdfd" stroke="none" stroke-width="1" />
<rect x="415" y="108" width="1" height="25" fill="#a4a4a4" stroke="none" stroke-width="1" />
<rect x="413" y="133" width="3" height="1" fill="#a4a4a4" stroke="none" stroke-width="1" />
<rect x="417" y="108" width="1" height="25" fill="#fdfdfd" stroke="none" stroke-width="1" />
<rect x="418" y="108" width="1" height="25" fill="#fdfdfd" stroke="none" stroke-width="1" />
<rect x="419" y="108" width="1" height="25" fill="#a4a4a4" stroke="none" stroke-width="1" />
<rect x="417" y="133" width="3" height="1" fill="#a4a4a4" stroke="none" stroke-width="1" />
<path d="M425,114.5 m3,7 l-2.5,-2.5 q-1,-2 1.5,-1 l1.5,1 v-5 q1,-1.5 2,0 v-1.5 q1,-1.5 2,0 v1 q1,-1.5 2,0 v1.5 q1,-1.5 2,0 v6 q0,4 -3,5.5 h-4 q-2,-2 -2.5,-5 z" fill="#f0f0f0" stroke="#a9a9a9" stroke-width="1.2" shape-rendering="auto"/>
<rect x="431" y="123" width="1.6" height="4.5" fill="#a9a9a9" stroke="none" stroke-width="1" />
<rect x="436" y="123" width="1.6" height="4.5" fill="#a9a9a9" stroke="none" stroke-width="1" />
<rect x="430" y="126" width="3.5" height="1.5" fill="#a9a9a9" stroke="none" stroke-width="1" />
<path d="M448,114.5 m3,7 l-2.5,-2.5 q-1,-2 1.5,-1 l1.5,1 v-5 q1,-1.5 2,0 v-1.5 q1,-1.5 2,0 v1 q1,-1.5 2,0 v1.5 q1,-1.5 2,0 v6 q0,4 -3,5.5 h-4 q-2,-2 -2.5,-5 z" fill="#f0f0f0" stroke="#a9a9a9" stroke-width="1.2" shape-rendering="auto"/>
<path d="M451,120 l2,-2 l2,1 l2,-2 l3,2 l-1,3 l2,2 l-3,2 l-1,-2 l-3,2 l-1,-3 l-2,-1 Z" fill="#a9a9a9" stroke="#a9a9a9" stroke-width="1" shape-rendering="auto"/>
<rect x="459" y="123" width="1.6" height="4.5" fill="#a9a9a9" stroke="none" stroke-width="1" />
<path d="M472,114 L484.5,120.7 L472,127.5 Z" fill="#a9a9a9" stroke="none" stroke-width="1" shape-rendering="auto"/>
<rect x="495" y="115" width="11.5" height="12.8" fill="#a9a9a9" stroke="none" stroke-width="1" />
<rect x="518" y="115" width="4.6" height="12.8" fill="#a9a9a9" stroke="none" stroke-width="1" />
<rect x="524.4" y="115" width="4.6" height="12.8" fill="#a9a9a9" stroke="none" stroke-width="1" />
<path d="M540,114.5 L550,121 L540,127.5 Z" fill="#a9a9a9" stroke="none" stroke-width="1" shape-rendering="auto"/>
<rect x="550" y="114" width="3.8" height="14" fill="#a9a9a9" stroke="none" stroke-width="1" />
<path d="M563,114.5 L567,118 L563,121.5 Z" fill="#a9a9a9" stroke="none" stroke-width="1" shape-rendering="auto"/>
<rect x="568" y="114" width="1.8" height="10" fill="#a9a9a9" stroke="none" stroke-width="1" />
<rect x="571.3" y="117" width="4" height="7.3" fill="#a9a9a9" stroke="none" stroke-width="1" />
<rect x="575" y="118" width="2.5" height="1" fill="#a9a9a9" stroke="none" stroke-width="1" />
<rect x="575" y="120.5" width="2.5" height="1" fill="#a9a9a9" stroke="none" stroke-width="1" />
<rect x="575" y="123" width="2.5" height="1" fill="#a9a9a9" stroke="none" stroke-width="1" />
<rect x="564" y="124.3" width="11.3" height="3.3" fill="#a9a9a9" stroke="none" stroke-width="1" />
<rect x="586" y="118" width="3" height="1" fill="#a9a9a9" stroke="none" stroke-width="1" />
<rect x="586" y="120.5" width="3" height="1" fill="#a9a9a9" stroke="none" stroke-width="1" />
<rect x="586" y="123" width="3" height="1" fill="#a9a9a9" stroke="none" stroke-width="1" />
<rect x="589" y="117" width="4.5" height="7.3" fill="#a9a9a9" stroke="none" stroke-width="1" />
<path d="M594,115 L598,118.5 L594,122 Z" fill="#a9a9a9" stroke="none" stroke-width="1" shape-rendering="auto"/>
<rect x="598" y="114" width="1.8" height="10" fill="#a9a9a9" stroke="none" stroke-width="1" />
<rect x="588" y="124.3" width="10.5" height="3.3" fill="#a9a9a9" stroke="none" stroke-width="1" />
<path d="M609,114.5 L616,121 L609,127.5 Z M616,114.5 L623,121 L616,127.5 Z" fill="#a9a9a9" stroke="none" stroke-width="1" shape-rendering="auto"/>
<path d="M632,115 L644,120 V122 L632,127 V124.5 L640,121 L632,117.5 Z" fill="#a9a9a9" stroke="none" stroke-width="1" shape-rendering="auto"/>
<rect x="643.5" y="114.5" width="3.2" height="13" fill="#a9a9a9" stroke="none" stroke-width="1" />
<rect x="58.5" y="181.5" width="9" height="8" fill="none" stroke="#a9a9a9" stroke-width="1.2" />
<rect x="65" y="181" width="8" height="2" fill="#a9a9a9" stroke="none" stroke-width="1" />
<path d="M68,183 h5 v6 h-3 v-3 h-2 z" fill="#a9a9a9" stroke="none" stroke-width="1" shape-rendering="auto"/>
<path d="M58.6,195.6 v-3.2 q0.2,-0.8 1,-0.8 M61.3,195.4 c-1.6,-0.8 -1.4,-4 1.4,-4 c2.8,0 3,3.2 1.4,4 M64.9,195.6 v-3.2 q0.2,-0.8 1,-0.8 M67.6,195.4 c-1.6,-0.8 -1.4,-4 1.4,-4 c2.8,0 3,3.2 1.4,4 M71.2,195.6 v-3.2 q0.2,-0.8 1,-0.8" fill="none" stroke="#a9a9a9" stroke-width="1.1" shape-rendering="auto"/>
<path d="M59.5,215 L66.5,211 L73.5,215 L66.5,219 Z M59.5,217.5 L66.5,221.5 L73.5,217.5 M59.5,220 L66.5,224 L73.5,220" fill="#fff" stroke="#000" stroke-width="1.1" shape-rendering="auto"/>
<path d="M59.5,215 V220 M73.5,215 V220" fill="none" stroke="#000" stroke-width="1" shape-rendering="auto"/>
<path d="M65.3,207.5 h2.6 v3.5 h2.4 l-3.7,3.6 l-3.7,-3.6 h2.4 z" fill="#0000a0" stroke="none" stroke-width="1" shape-rendering="auto"/>
<rect x="59.5" y="236.5" width="13.5" height="8.5" fill="#fff" stroke="#000" stroke-width="1.3" />
<rect x="61.5" y="240.0" width="1" height="1" fill="#000" stroke="none" stroke-width="1" />
<rect x="63.8" y="240.0" width="1" height="1" fill="#000" stroke="none" stroke-width="1" />
<rect x="66.1" y="240.0" width="1" height="1" fill="#000" stroke="none" stroke-width="1" />
<rect x="68.4" y="240.0" width="1" height="1" fill="#000" stroke="none" stroke-width="1" />
<rect x="70.7" y="240.0" width="1" height="1" fill="#000" stroke="none" stroke-width="1" />
<rect x="61.5" y="242.2" width="1" height="1" fill="#000" stroke="none" stroke-width="1" />
<rect x="63.8" y="242.2" width="1" height="1" fill="#000" stroke="none" stroke-width="1" />
<rect x="66.1" y="242.2" width="1" height="1" fill="#000" stroke="none" stroke-width="1" />
<rect x="68.4" y="242.2" width="1" height="1" fill="#000" stroke="none" stroke-width="1" />
<rect x="70.7" y="242.2" width="1" height="1" fill="#000" stroke="none" stroke-width="1" />
<path d="M63.5,231.5 v3 h-1.8 l2.6,3 l2.6,-3 h-1.8 v-3 z M69,231.5 v3 h-1.8 l2.6,3 l2.6,-3 h-1.8 v-3 z" fill="#0000a0" stroke="none" stroke-width="1" shape-rendering="auto"/>
<rect x="60" y="232" width="1" height="1" fill="#000080" stroke="none" stroke-width="1" />
<rect x="62.5" y="231" width="1" height="1" fill="#000080" stroke="none" stroke-width="1" />
<rect x="67" y="231" width="1" height="1" fill="#000080" stroke="none" stroke-width="1" />
<rect x="72" y="232" width="1" height="1" fill="#000080" stroke="none" stroke-width="1" />
<circle cx="61.5" cy="259.8" r="2.7" fill="#a9a9a9" shape-rendering="auto"/>
<rect x="58" y="260.5" width="7" height="4" fill="#a9a9a9" stroke="none" stroke-width="1" />
<rect x="64.5" y="261.5" width="8" height="9.5" fill="#f4f4f4" stroke="#a9a9a9" stroke-width="1.2" />
<path d="M67,264.5 h3.5 l-3.5,4 h3.5" fill="none" stroke="#a9a9a9" stroke-width="1" shape-rendering="auto"/>
<circle cx="61.5" cy="281.8" r="2.7" fill="#a9a9a9" shape-rendering="auto"/>
<rect x="58" y="282.5" width="7" height="4" fill="#a9a9a9" stroke="none" stroke-width="1" />
<rect x="64.5" y="283.5" width="8" height="9.5" fill="#f4f4f4" stroke="#a9a9a9" stroke-width="1.2" />
<path d="M66,285 l5,6.5 m0,-6.5 l-5,6.5" fill="none" stroke="#a9a9a9" stroke-width="1" shape-rendering="auto"/>
<circle cx="61.5" cy="303.8" r="2.7" fill="#a9a9a9" shape-rendering="auto"/>
<rect x="58" y="304.5" width="7" height="4" fill="#a9a9a9" stroke="none" stroke-width="1" />
<rect x="64.5" y="305.5" width="8" height="9.5" fill="#f4f4f4" stroke="#a9a9a9" stroke-width="1.2" />
<path d="M66.5,311 l1.5,2 l3,-5" fill="none" stroke="#a9a9a9" stroke-width="1.2" shape-rendering="auto"/>
<path d="M59,309.5 v3 h3 m-3,0 l2,-2" fill="none" stroke="#a9a9a9" stroke-width="1" shape-rendering="auto"/>
<circle cx="61.5" cy="325.8" r="2.7" fill="#a9a9a9" shape-rendering="auto"/>
<rect x="58" y="326.5" width="7" height="4" fill="#a9a9a9" stroke="none" stroke-width="1" />
<rect x="64.5" y="327.5" width="8" height="9.5" fill="#f4f4f4" stroke="#a9a9a9" stroke-width="1.2" />
<rect x="67.5" y="332" width="2" height="2" fill="#a9a9a9" stroke="none" stroke-width="1" />
<path d="M58.5,333.5 h5 m-2,-2 l2,2 l-2,2" fill="none" stroke="#a9a9a9" stroke-width="1" shape-rendering="auto"/>
<rect x="58.5" y="350.5" width="2.5" height="2" fill="#ffff40" stroke="#000" stroke-width="0.8" />
<path d="M60.5,352 V363" fill="none" stroke="#000" stroke-width="1.3" shape-rendering="auto"/>
<rect x="60.5" y="354" width="4.5" height="3" rx="1" fill="#ffff40" stroke="#000" stroke-width="0.9" shape-rendering="auto"/>
<rect x="60.5" y="357.5" width="4.5" height="3" rx="1" fill="#ffff40" stroke="#000" stroke-width="0.9" shape-rendering="auto"/>
<rect x="60.5" y="361" width="4.5" height="3" rx="1" fill="#ffff40" stroke="#000" stroke-width="0.9" shape-rendering="auto"/>
<rect x="66.3" y="352" width="1.4" height="12.5" fill="#000" stroke="none" stroke-width="1" />
<rect x="69.5" y="352" width="4" height="3" fill="#30c8ff" stroke="#0040c0" stroke-width="1" />
<rect x="69.5" y="356.5" width="4" height="3" fill="#30c8ff" stroke="#0040c0" stroke-width="1" />
<rect x="69.5" y="361" width="4" height="3" fill="#30c8ff" stroke="#0040c0" stroke-width="1" />
<rect x="58.5" y="377.5" width="14.5" height="8.5" fill="#30f4e4" stroke="#10a090" stroke-width="1" />
<path d="M58.5,381.5 H62 M62,378.5 V385 M65,378.5 V385 M65,381.5 H68 M68,378.5 V385 M71,378.5 V385 M71,381.5 H73" fill="none" stroke="#000" stroke-width="1" />
<path d="M58.6,392.1 v-3.2 q0.2,-0.8 1,-0.8 M61.3,391.9 c-1.6,-0.8 -1.4,-4 1.4,-4 c2.8,0 3,3.2 1.4,4 M64.9,392.1 v-3.2 q0.2,-0.8 1,-0.8 M67.6,391.9 c-1.6,-0.8 -1.4,-4 1.4,-4 c2.8,0 3,3.2 1.4,4 M71.2,392.1 v-3.2 q0.2,-0.8 1,-0.8" fill="none" stroke="#000" stroke-width="1.1" shape-rendering="auto"/>
<path d="M58.5,399 H73 V400.5 H64 V412 H58.5 Z" fill="#a9a9a9" stroke="none" stroke-width="1" shape-rendering="auto"/>
<rect x="58.5" y="399" width="2.5" height="14" fill="#a9a9a9" stroke="none" stroke-width="1" />
<rect x="64.5" y="402.5" width="8" height="10" fill="#f4f4f4" stroke="#a9a9a9" stroke-width="1.2" />
<path d="M67,405.5 h3.5 l-3.5,4 h3.5" fill="none" stroke="#a9a9a9" stroke-width="1" shape-rendering="auto"/>
<path d="M58.5,421 H73 V422.5 H64 V434 H58.5 Z" fill="#a9a9a9" stroke="none" stroke-width="1" shape-rendering="auto"/>
<rect x="58.5" y="421" width="2.5" height="14" fill="#a9a9a9" stroke="none" stroke-width="1" />
<rect x="64.5" y="424.5" width="8" height="10" fill="#f4f4f4" stroke="#a9a9a9" stroke-width="1.2" />
<path d="M66,426 l5,7 m0,-7 l-5,7" fill="none" stroke="#a9a9a9" stroke-width="1" shape-rendering="auto"/>
<path d="M58.5,443 H73 V444.5 H64 V456 H58.5 Z" fill="#a9a9a9" stroke="none" stroke-width="1" shape-rendering="auto"/>
<rect x="58.5" y="443" width="2.5" height="14" fill="#a9a9a9" stroke="none" stroke-width="1" />
<rect x="64.5" y="446.5" width="8" height="10" fill="#f4f4f4" stroke="#a9a9a9" stroke-width="1.2" />
<path d="M66.5,452 l1.5,2.5 l3,-6" fill="none" stroke="#a9a9a9" stroke-width="1.2" shape-rendering="auto"/>
</svg>
</body></html>
